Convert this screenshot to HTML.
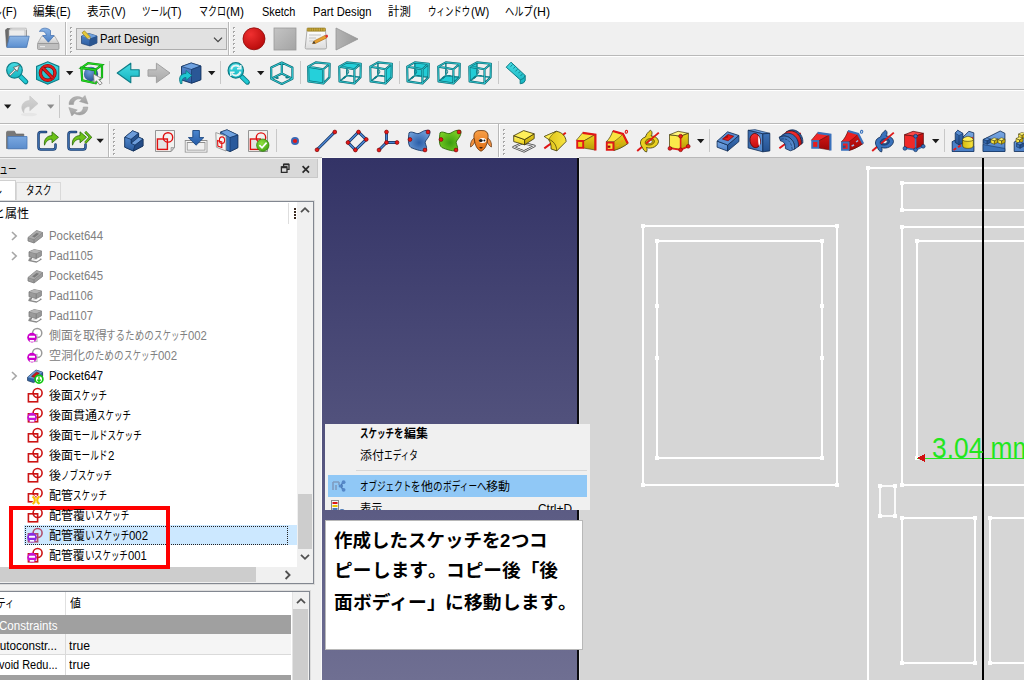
<!DOCTYPE html>
<html lang="ja"><head><meta charset="utf-8"><title>FreeCAD</title>
<style>
html,body{margin:0;padding:0;}
body{width:1024px;height:680px;overflow:hidden;position:relative;background:#f0f0f0;font-family:"Liberation Sans","Noto Sans CJK JP",sans-serif;font-size:12px;}
.a{position:absolute;}
.t{position:absolute;white-space:nowrap;}
.r{display:inline-block;white-space:nowrap;}
.s{display:inline-block;transform-origin:0 50%;white-space:nowrap;}
svg{position:absolute;overflow:visible;}
.hl{position:absolute;left:0;width:1024px;height:1px;}
.vs{position:absolute;width:1px;background:#c5c5c5;}
.hd{position:absolute;width:3px;}

</style></head>
<body>
<!-- menu bar -->
<div class="a" style="left:0;top:0;width:1024px;height:22px;background:#fff"></div>
<!-- toolbar row lines -->
<div class="hl" style="top:55px;background:#b9b9b9"></div><div class="hl" style="top:56px;background:#fff"></div>
<div class="hl" style="top:89px;background:#b9b9b9"></div><div class="hl" style="top:90px;background:#fff"></div>
<div class="hl" style="top:123px;background:#b9b9b9"></div><div class="hl" style="top:124px;background:#fff"></div>
<div class="hl" style="top:157px;background:#b9b9b9"></div><div class="a" style="left:322px;top:157px;width:257px;height:1px;background:#f6f6f4"></div><div class="a" style="left:321px;top:158px;width:1px;height:522px;background:#fafafa"></div>
<!-- 3D view -->
<div class="a" style="left:322px;top:158px;width:255px;height:522px;background:linear-gradient(#333366,#6f6f92)"></div>
<div class="a" style="left:577px;top:158px;width:2px;height:522px;background:#0c0c10"></div>
<div class="a" style="left:579px;top:158px;width:445px;height:522px;background:#d6d6d6"></div><div class="a" style="left:579px;top:158px;width:1px;height:522px;background:#e2e2e2"></div>
<!-- ===== dock: combo view ===== -->
<div class="a" style="left:0;top:159px;width:318px;height:19px;background:#d9d9d9;border-bottom:1px solid #c8c8c8;border-right:1px solid #c8c8c8;box-sizing:border-box"></div>
<!-- float / close buttons -->
<svg style="left:280px;top:163px" width="32" height="12" viewBox="0 0 32 12">
 <path d="M3.6 3.6V1.400h5.400v5h-1.600M1.400 4h5.600v5.400h-5.600z" fill="none" stroke="#2b2b2b" stroke-width="1.300"/><path d="M3.600 1.400h5.400M1.400 4.200h5.600" stroke="#2b2b2b" stroke-width="1.900"/>
 <path d="M22.6 3.2l6.4 6.4M29 3.2l-6.4 6.4" fill="none" stroke="#2b2b2b" stroke-width="1.7"/>
</svg>
<!-- tabs -->
<div class="a" style="left:-2px;top:180px;width:18px;height:22px;background:#fff;border:1px solid #d0d0d0;border-bottom:none;box-sizing:border-box"></div>
<div class="a" style="left:16px;top:182px;width:45px;height:18px;background:#f0f0f0;border:1px solid #d9d9d9;border-bottom:none;box-sizing:border-box"></div>
<!-- tree frame -->
<div class="a" style="left:-2px;top:200px;width:317px;height:385px;border:1px solid #dcdcdc;box-sizing:border-box"></div>
<div class="a" style="left:-2px;top:201px;width:316px;height:383px;border:1px solid #828790;box-sizing:border-box;background:#fff"></div>
<!-- header section -->
<div class="a" style="left:288px;top:203px;width:1px;height:21px;background:#dedede"></div>
<div class="a" style="left:294px;top:208px;width:2px;height:12px;background:repeating-linear-gradient(#3a2a20 0 2px,#fff 2px 3px)"></div>
<!-- vertical scroll bar of tree -->
<div class="a" style="left:297px;top:202px;width:16px;height:365px;background:#f0f0f0"></div>
<div class="a" style="left:298px;top:494px;width:14px;height:55px;background:#cdcdcd"></div>
<svg style="left:300px;top:206px" width="10" height="8" viewBox="0 0 10 8"><path d="M1 6.2l4-4 4 4" fill="none" stroke="#505050" stroke-width="1.8"/></svg>
<svg style="left:300px;top:553px" width="10" height="8" viewBox="0 0 10 8"><path d="M1 1.8l4 4 4-4" fill="none" stroke="#505050" stroke-width="1.8"/></svg>
<!-- horizontal scroll bar of tree -->
<div class="a" style="left:0;top:567px;width:313px;height:16px;background:#f0f0f0"></div>
<div class="a" style="left:0;top:567px;width:256px;height:15px;background:#cdcdcd"></div>
<svg style="left:284px;top:570px" width="8" height="10" viewBox="0 0 8 10"><path d="M1.6 1l4 4-4 4" fill="none" stroke="#505050" stroke-width="1.8"/></svg>
<!-- selected row -->
<div class="a" style="left:24px;top:525px;width:273px;height:19.5px;background:#cce8ff"></div>
<div class="a" style="left:25px;top:525.5px;width:263px;height:19px;border:1px dotted #222;box-sizing:border-box"></div>
<!-- red annotation rectangle -->
<div class="a" style="left:8.5px;top:506.3px;width:161px;height:62.5px;border:4px solid #fe0000;box-sizing:border-box"></div>
<!-- ===== property view ===== -->
<div class="a" style="left:-2px;top:590px;width:313px;height:100px;border:1px solid #dcdcdc;box-sizing:border-box"></div>
<div class="a" style="left:-2px;top:591px;width:312px;height:100px;border:1px solid #828790;box-sizing:border-box;background:#fff"></div>
<div class="a" style="left:0;top:615px;width:291px;height:19px;background:#a0a0a0"></div>
<div class="a" style="left:0;top:634px;width:291px;height:20px;background:#f5f5f5"></div>
<div class="a" style="left:0;top:654px;width:291px;height:1px;background:#dadada"></div>
<div class="a" style="left:0;top:675px;width:291px;height:5px;background:#a0a0a0"></div>
<div class="a" style="left:65px;top:592px;width:1px;height:23px;background:#e0e0e0"></div>
<div class="a" style="left:65px;top:634px;width:1px;height:41px;background:#dadada"></div>
<div class="a" style="left:292px;top:592px;width:1px;height:88px;background:#e4e4e4"></div>
<div class="a" style="left:293px;top:592px;width:16px;height:88px;background:#f0f0f0"></div>
<div class="a" style="left:293px;top:609px;width:15px;height:71px;background:#cdcdcd"></div>
<svg style="left:296px;top:597px" width="10" height="8" viewBox="0 0 10 8"><path d="M1 6.2l4-4 4 4" fill="none" stroke="#505050" stroke-width="1.8"/></svg>

<svg style="left:27px;top:228px" width="16" height="16" viewBox="0 0 16 16"><path d="M1 9.5L9.5 2.5L15.5 4.5L15.5 8.5L7 15L1 13Z" fill="#9c9c9c" stroke="#7c7c7c" stroke-width=".8"/><path d="M1 9.5L7 11.5L15.5 4.5M7 11.5V15" fill="none" stroke="#7c7c7c" stroke-width=".8"/><path d="M5.2 8.6L9.6 5L12 5.8L7.6 9.4Z" fill="#7a7a7a"/><path d="M1 9.5L9.5 2.5L15.5 4.5L7 11.5Z" fill="#b4b4b4" opacity=".6"/><path d="M5.2 8.6L9.6 5L12 5.8L7.6 9.4Z" fill="#7a7a7a"/></svg>
<svg style="left:27px;top:248px" width="16" height="16" viewBox="0 0 16 16"><path d="M2 10.5L5 9.2V11L11 12L14 10.2L14.8 11.5L9.4 14.8L1.2 13Z" fill="#8a8a8a"/><path d="M4.5 11.6L9.6 12.6L12.4 11.2" fill="none" stroke="#fff" stroke-width="1.3"/><path d="M2 3.8L7.2 1.6L14.4 3L14.4 7.8L9.2 10.6L2 8.8Z" fill="#9a9a9a" stroke="#7a7a7a" stroke-width=".8"/><path d="M2 3.8L9.2 5.4L14.4 3M9.2 5.4V10.6" fill="none" stroke="#777" stroke-width=".8"/><path d="M2 3.8L7.2 1.6L14.4 3L9.2 5.4Z" fill="#b6b6b6"/></svg>
<svg style="left:27px;top:268px" width="16" height="16" viewBox="0 0 16 16"><path d="M1 9.5L9.5 2.5L15.5 4.5L15.5 8.5L7 15L1 13Z" fill="#9c9c9c" stroke="#7c7c7c" stroke-width=".8"/><path d="M1 9.5L7 11.5L15.5 4.5M7 11.5V15" fill="none" stroke="#7c7c7c" stroke-width=".8"/><path d="M5.2 8.6L9.6 5L12 5.8L7.6 9.4Z" fill="#7a7a7a"/><path d="M1 9.5L9.5 2.5L15.5 4.5L7 11.5Z" fill="#b4b4b4" opacity=".6"/><path d="M5.2 8.6L9.6 5L12 5.8L7.6 9.4Z" fill="#7a7a7a"/></svg>
<svg style="left:27px;top:288px" width="16" height="16" viewBox="0 0 16 16"><path d="M2 10.5L5 9.2V11L11 12L14 10.2L14.8 11.5L9.4 14.8L1.2 13Z" fill="#8a8a8a"/><path d="M4.5 11.6L9.6 12.6L12.4 11.2" fill="none" stroke="#fff" stroke-width="1.3"/><path d="M2 3.8L7.2 1.6L14.4 3L14.4 7.8L9.2 10.6L2 8.8Z" fill="#9a9a9a" stroke="#7a7a7a" stroke-width=".8"/><path d="M2 3.8L9.2 5.4L14.4 3M9.2 5.4V10.6" fill="none" stroke="#777" stroke-width=".8"/><path d="M2 3.8L7.2 1.6L14.4 3L9.2 5.4Z" fill="#b6b6b6"/></svg>
<svg style="left:27px;top:308px" width="16" height="16" viewBox="0 0 16 16"><path d="M2 10.5L5 9.2V11L11 12L14 10.2L14.8 11.5L9.4 14.8L1.2 13Z" fill="#8a8a8a"/><path d="M4.5 11.6L9.6 12.6L12.4 11.2" fill="none" stroke="#fff" stroke-width="1.3"/><path d="M2 3.8L7.2 1.6L14.4 3L14.4 7.8L9.2 10.6L2 8.8Z" fill="#9a9a9a" stroke="#7a7a7a" stroke-width=".8"/><path d="M2 3.8L9.2 5.4L14.4 3M9.2 5.4V10.6" fill="none" stroke="#777" stroke-width=".8"/><path d="M2 3.8L7.2 1.6L14.4 3L9.2 5.4Z" fill="#b6b6b6"/></svg>
<svg style="left:27px;top:328px" width="16" height="16" viewBox="0 0 16 16"><circle cx="10.2" cy="5" r="4.6" fill="#fff" stroke="#9a9a9a" stroke-width="1.5"/><rect x="3" y="6.5" width="7" height="7" fill="#fff" stroke="#bdbdbd" stroke-width="1.2"/><circle cx="5" cy="9.600" r="4.800" fill="#cc00cc"/><rect x="2" y="7.800" width="6" height="2" rx=".6" fill="#fff"/><rect x="2.800" y="12" width="4.400" height="1.700" fill="#fff"/></svg>
<svg style="left:27px;top:348px" width="16" height="16" viewBox="0 0 16 16"><circle cx="10.2" cy="5" r="4.6" fill="#fff" stroke="#9a9a9a" stroke-width="1.5"/><rect x="3" y="6.5" width="7" height="7" fill="#fff" stroke="#bdbdbd" stroke-width="1.2"/><circle cx="5" cy="9.600" r="4.800" fill="#cc00cc"/><rect x="2" y="7.800" width="6" height="2" rx=".6" fill="#fff"/><rect x="2.800" y="12" width="4.400" height="1.700" fill="#fff"/></svg>
<svg style="left:27px;top:368px" width="16" height="16" viewBox="0 0 16 16"><path d="M0.6 9.2L9 2L15.6 4.2L15.6 8.4L6.6 14.6L0.6 12.6Z" fill="#3465a4" stroke="#16315a" stroke-width=".8"/><path d="M0.6 9.2L9 2L15.6 4.2L6.8 10.8Z" fill="#6f9bd0"/><path d="M4.6 8.4L9.4 4.2L12.4 5.2L7.4 9.4Z" fill="#d01818" stroke="#7a0c0c" stroke-width=".6"/><circle cx="12" cy="11.2" r="3.9" fill="#fff" stroke="#12c812" stroke-width="1.7"/><path d="M12 8.6v4.4M10.2 11.6l1.8 2 1.8-2" fill="none" stroke="#12c812" stroke-width="1.3"/></svg>
<svg style="left:27px;top:388px" width="16" height="16" viewBox="0 0 16 16"><rect x="1.4" y="5.8" width="9.2" height="8" fill="#fff" stroke="#cc1414" stroke-width="1.6"/><circle cx="10.600" cy="5" r="4.500" fill="none" stroke="#cc1414" stroke-width="1.600"/><path d="M5.9 5.8h4.7v4" fill="none" stroke="#cc1414" stroke-width="1.2" opacity=".55"/></svg>
<svg style="left:27px;top:408px" width="16" height="16" viewBox="0 0 16 16"><rect x="1.4" y="5.8" width="9.2" height="8" fill="#fff" stroke="#cc1414" stroke-width="1.6"/><circle cx="10.600" cy="5" r="4.500" fill="none" stroke="#cc1414" stroke-width="1.600"/><path d="M5.9 5.8h4.7v4" fill="none" stroke="#cc1414" stroke-width="1.2" opacity=".55"/><circle cx="5" cy="9.600" r="4.800" fill="#c814d2"/><rect x="2" y="7.800" width="6" height="2" rx=".6" fill="#fff"/><rect x="2.800" y="12" width="4.400" height="1.700" fill="#fff"/></svg>
<svg style="left:27px;top:428px" width="16" height="16" viewBox="0 0 16 16"><rect x="1.4" y="5.8" width="9.2" height="8" fill="#fff" stroke="#cc1414" stroke-width="1.6"/><circle cx="10.600" cy="5" r="4.500" fill="none" stroke="#cc1414" stroke-width="1.600"/><path d="M5.9 5.8h4.7v4" fill="none" stroke="#cc1414" stroke-width="1.2" opacity=".55"/></svg>
<svg style="left:27px;top:448px" width="16" height="16" viewBox="0 0 16 16"><rect x="1.4" y="5.8" width="9.2" height="8" fill="#fff" stroke="#cc1414" stroke-width="1.6"/><circle cx="10.600" cy="5" r="4.500" fill="none" stroke="#cc1414" stroke-width="1.600"/><path d="M5.9 5.8h4.7v4" fill="none" stroke="#cc1414" stroke-width="1.2" opacity=".55"/></svg>
<svg style="left:27px;top:468px" width="16" height="16" viewBox="0 0 16 16"><rect x="1.4" y="5.8" width="9.2" height="8" fill="#fff" stroke="#cc1414" stroke-width="1.6"/><circle cx="10.600" cy="5" r="4.500" fill="none" stroke="#cc1414" stroke-width="1.600"/><path d="M5.9 5.8h4.7v4" fill="none" stroke="#cc1414" stroke-width="1.2" opacity=".55"/></svg>
<svg style="left:27px;top:488px" width="16" height="16" viewBox="0 0 16 16"><rect x="1.4" y="5.8" width="9.2" height="8" fill="#fff" stroke="#cc1414" stroke-width="1.6"/><circle cx="10.600" cy="5" r="4.500" fill="none" stroke="#cc1414" stroke-width="1.600"/><path d="M5.9 5.8h4.7v4" fill="none" stroke="#cc1414" stroke-width="1.2" opacity=".55"/><path d="M5.600 8.400c3 2.200 3 5.400 0 7.600M12.400 8.400c-3 2.200-3 5.400 0 7.600" fill="none" stroke="#fff" stroke-width="3.200"/><path d="M5.600 8.400c3 2.200 3 5.400 0 7.600M12.400 8.400c-3 2.200-3 5.400 0 7.600" fill="none" stroke="#fcc000" stroke-width="2.100"/></svg>
<svg style="left:27px;top:508px" width="16" height="16" viewBox="0 0 16 16"><rect x="1.4" y="5.8" width="9.2" height="8" fill="#fff" stroke="#cc1414" stroke-width="1.6"/><circle cx="10.600" cy="5" r="4.500" fill="none" stroke="#cc1414" stroke-width="1.600"/><path d="M5.9 5.8h4.7v4" fill="none" stroke="#cc1414" stroke-width="1.2" opacity=".55"/></svg>
<svg style="left:27px;top:528px" width="16" height="16" viewBox="0 0 16 16"><rect x="1.4" y="5.8" width="9.2" height="8" fill="#e8e0f0" stroke="#b0506e" stroke-width="1.6"/><circle cx="10.600" cy="5" r="4.500" fill="none" stroke="#b0506e" stroke-width="1.600"/><path d="M5.9 5.8h4.7v4" fill="none" stroke="#b0506e" stroke-width="1.2" opacity=".55"/><circle cx="5" cy="9.600" r="4.800" fill="#8a2be2"/><rect x="2" y="7.800" width="6" height="2" rx=".6" fill="#fff"/><rect x="2.800" y="12" width="4.400" height="1.700" fill="#fff"/></svg>
<svg style="left:27px;top:548px" width="16" height="16" viewBox="0 0 16 16"><rect x="1.4" y="5.8" width="9.2" height="8" fill="#fff" stroke="#cc1414" stroke-width="1.6"/><circle cx="10.600" cy="5" r="4.500" fill="none" stroke="#cc1414" stroke-width="1.600"/><path d="M5.9 5.8h4.7v4" fill="none" stroke="#cc1414" stroke-width="1.2" opacity=".55"/><circle cx="5" cy="9.600" r="4.800" fill="#c814d2"/><rect x="2" y="7.800" width="6" height="2" rx=".6" fill="#fff"/><rect x="2.800" y="12" width="4.400" height="1.700" fill="#fff"/></svg>
<svg style="left:10.5px;top:231px" width="7" height="10" viewBox="0 0 7 10"><path d="M1 1l4.2 4-4.2 4" fill="none" stroke="#a6a6a6" stroke-width="1.6"/></svg>
<svg style="left:10.5px;top:251px" width="7" height="10" viewBox="0 0 7 10"><path d="M1 1l4.2 4-4.2 4" fill="none" stroke="#a6a6a6" stroke-width="1.6"/></svg>
<svg style="left:10.5px;top:371px" width="7" height="10" viewBox="0 0 7 10"><path d="M1 1l4.2 4-4.2 4" fill="none" stroke="#a6a6a6" stroke-width="1.6"/></svg>
<svg style="left:0;top:0" width="1024" height="158" viewBox="0 0 1024 158"><defs><linearGradient id="gFold" x1="0" y1="0" x2="0" y2="1"><stop offset="0" stop-color="#8db5e4"/><stop offset="1" stop-color="#5b8fd0"/></linearGradient><linearGradient id="gDrv" x1="0" y1="0" x2="0" y2="1"><stop offset="0" stop-color="#f0f0f0"/><stop offset="1" stop-color="#c8c8c8"/></linearGradient><linearGradient id="gArr" x1="0" y1="0" x2="0" y2="1"><stop offset="0" stop-color="#8ab4e6"/><stop offset="1" stop-color="#4a7fc4"/></linearGradient><linearGradient id="gCubF" x1="0" y1="0" x2="0" y2="1"><stop offset="0" stop-color="#4f86cc"/><stop offset="1" stop-color="#2f5ea0"/></linearGradient><radialGradient id="gRec" cx="0.35" cy="0.3" r="0.8"><stop offset="0" stop-color="#f03030"/><stop offset="1" stop-color="#b40808"/></radialGradient><linearGradient id="gStop" x1="0" y1="0" x2="1" y2="1"><stop offset="0" stop-color="#c4c4c4"/><stop offset="1" stop-color="#a4a4a4"/></linearGradient><linearGradient id="gPad" x1="0" y1="0" x2="0" y2="1"><stop offset="0" stop-color="#ffffff"/><stop offset="1" stop-color="#dcdcdc"/></linearGradient><linearGradient id="gPlay" x1="0" y1="0" x2="1" y2="0"><stop offset="0" stop-color="#b4b4b4"/><stop offset="1" stop-color="#9a9a9a"/></linearGradient><linearGradient id="gCy" x1="0" y1="0" x2="0" y2="1"><stop offset="0" stop-color="#48dce4"/><stop offset="1" stop-color="#14b4c0"/></linearGradient><radialGradient id="gSph" cx="0.4" cy="0.35" r="0.7"><stop offset="0" stop-color="#6f9fdc"/><stop offset="1" stop-color="#244e8c"/></radialGradient><linearGradient id="gGr" x1="0" y1="0" x2="0" y2="1"><stop offset="0" stop-color="#c8c8c8"/><stop offset="1" stop-color="#a8a8a8"/></linearGradient><linearGradient id="gB1" x1="0" y1="0" x2="0" y2="1"><stop offset="0" stop-color="#5b8fd4"/><stop offset="1" stop-color="#2c5ea4"/></linearGradient><linearGradient id="gRedo" x1="0" y1="0" x2="0" y2="1"><stop offset="0" stop-color="#d4d4d4"/><stop offset="1" stop-color="#c0c0c0"/></linearGradient><linearGradient id="gRef" x1="0" y1="0" x2="0" y2="1"><stop offset="0" stop-color="#b8b8b8"/><stop offset="1" stop-color="#9c9c9c"/></linearGradient><linearGradient id="gFold2" x1="0" y1="0" x2="0" y2="1"><stop offset="0" stop-color="#7aa8e0"/><stop offset="1" stop-color="#5a8ccc"/></linearGradient><linearGradient id="gBodyF" x1="0" y1="0" x2="0" y2="1"><stop offset="0" stop-color="#4f86cc"/><stop offset="1" stop-color="#2a5a9c"/></linearGradient><linearGradient id="gDn" x1="0" y1="0" x2="0" y2="1"><stop offset="0" stop-color="#4a86d0"/><stop offset="1" stop-color="#245aa4"/></linearGradient><radialGradient id="gChk" cx="0.4" cy="0.35" r="0.75"><stop offset="0" stop-color="#8ee040"/><stop offset="1" stop-color="#3c9c10"/></radialGradient><radialGradient id="gSB" cx="0.5" cy="0.6" r="0.7"><stop offset="0" stop-color="#2c5ea8"/><stop offset="1" stop-color="#78a8e0"/></radialGradient><radialGradient id="gSG" cx="0.5" cy="0.6" r="0.7"><stop offset="0" stop-color="#3c9c10"/><stop offset="1" stop-color="#84d828"/></radialGradient><linearGradient id="gShp" x1="0" y1="0" x2="0" y2="1"><stop offset="0" stop-color="#f8a048"/><stop offset="1" stop-color="#e06c10"/></linearGradient><linearGradient id="gY1" x1="0" y1="0" x2="0" y2="1"><stop offset="0" stop-color="#fff26a"/><stop offset="1" stop-color="#e8cc14"/></linearGradient><linearGradient id="gY2" x1="0" y1="0" x2="0" y2="1"><stop offset="0" stop-color="#ecd21c"/><stop offset="1" stop-color="#b89c08"/></linearGradient><linearGradient id="gY3" x1="0" y1="0" x2="1" y2="0"><stop offset="0" stop-color="#d8bc10"/><stop offset="1" stop-color="#f8e440"/></linearGradient><linearGradient id="gBl1" x1="0" y1="0" x2="0" y2="1"><stop offset="0" stop-color="#7aa8e2"/><stop offset="1" stop-color="#4a7ec6"/></linearGradient><linearGradient id="gBl2" x1="0" y1="0" x2="0" y2="1"><stop offset="0" stop-color="#3c72b8"/><stop offset="1" stop-color="#24508e"/></linearGradient><linearGradient id="gBl3" x1="0" y1="0" x2="1" y2="0"><stop offset="0" stop-color="#3468ac"/><stop offset="1" stop-color="#5a8ed0"/></linearGradient><linearGradient id="gR1" x1="0" y1="0" x2="0" y2="1"><stop offset="0" stop-color="#f43030"/><stop offset="1" stop-color="#c40c0c"/></linearGradient><linearGradient id="gR2" x1="0" y1="0" x2="0" y2="1"><stop offset="0" stop-color="#d41414"/><stop offset="1" stop-color="#9c0808"/></linearGradient></defs><rect x="65" y="22" width="1" height="33" fill="#b9b9b9"/><rect x="66" y="22" width="1" height="33" fill="#fff"/><rect x="70" y="27" width="2" height="2" fill="#a6a6a6"/><rect x="71" y="28" width="1" height="1" fill="#fff"/><rect x="70" y="31" width="2" height="2" fill="#a6a6a6"/><rect x="71" y="32" width="1" height="1" fill="#fff"/><rect x="70" y="35" width="2" height="2" fill="#a6a6a6"/><rect x="71" y="36" width="1" height="1" fill="#fff"/><rect x="70" y="39" width="2" height="2" fill="#a6a6a6"/><rect x="71" y="40" width="1" height="1" fill="#fff"/><rect x="70" y="43" width="2" height="2" fill="#a6a6a6"/><rect x="71" y="44" width="1" height="1" fill="#fff"/><rect x="70" y="47" width="2" height="2" fill="#a6a6a6"/><rect x="71" y="48" width="1" height="1" fill="#fff"/><rect x="70" y="51" width="2" height="2" fill="#a6a6a6"/><rect x="71" y="52" width="1" height="1" fill="#fff"/><rect x="228" y="22" width="1" height="33" fill="#b9b9b9"/><rect x="229" y="22" width="1" height="33" fill="#fff"/><rect x="233" y="27" width="2" height="2" fill="#a6a6a6"/><rect x="234" y="28" width="1" height="1" fill="#fff"/><rect x="233" y="31" width="2" height="2" fill="#a6a6a6"/><rect x="234" y="32" width="1" height="1" fill="#fff"/><rect x="233" y="35" width="2" height="2" fill="#a6a6a6"/><rect x="234" y="36" width="1" height="1" fill="#fff"/><rect x="233" y="39" width="2" height="2" fill="#a6a6a6"/><rect x="234" y="40" width="1" height="1" fill="#fff"/><rect x="233" y="43" width="2" height="2" fill="#a6a6a6"/><rect x="234" y="44" width="1" height="1" fill="#fff"/><rect x="233" y="47" width="2" height="2" fill="#a6a6a6"/><rect x="234" y="48" width="1" height="1" fill="#fff"/><rect x="233" y="51" width="2" height="2" fill="#a6a6a6"/><rect x="234" y="52" width="1" height="1" fill="#fff"/><rect x="109" y="61" width="1" height="23" fill="#c8c8c8"/><rect x="220" y="61" width="1" height="23" fill="#c8c8c8"/><rect x="300" y="61" width="1" height="23" fill="#c8c8c8"/><rect x="399" y="61" width="1" height="23" fill="#c8c8c8"/><rect x="498" y="61" width="1" height="23" fill="#c8c8c8"/><rect x="59" y="95" width="1" height="23" fill="#c8c8c8"/><rect x="108" y="124" width="1" height="33" fill="#b9b9b9"/><rect x="109" y="124" width="1" height="33" fill="#fff"/><rect x="113" y="129" width="2" height="2" fill="#a6a6a6"/><rect x="114" y="130" width="1" height="1" fill="#fff"/><rect x="113" y="133" width="2" height="2" fill="#a6a6a6"/><rect x="114" y="134" width="1" height="1" fill="#fff"/><rect x="113" y="137" width="2" height="2" fill="#a6a6a6"/><rect x="114" y="138" width="1" height="1" fill="#fff"/><rect x="113" y="141" width="2" height="2" fill="#a6a6a6"/><rect x="114" y="142" width="1" height="1" fill="#fff"/><rect x="113" y="145" width="2" height="2" fill="#a6a6a6"/><rect x="114" y="146" width="1" height="1" fill="#fff"/><rect x="113" y="149" width="2" height="2" fill="#a6a6a6"/><rect x="114" y="150" width="1" height="1" fill="#fff"/><rect x="113" y="153" width="2" height="2" fill="#a6a6a6"/><rect x="114" y="154" width="1" height="1" fill="#fff"/><rect x="276" y="129" width="1" height="23" fill="#c8c8c8"/><rect x="498" y="124" width="1" height="33" fill="#b9b9b9"/><rect x="499" y="124" width="1" height="33" fill="#fff"/><rect x="503" y="129" width="2" height="2" fill="#a6a6a6"/><rect x="504" y="130" width="1" height="1" fill="#fff"/><rect x="503" y="133" width="2" height="2" fill="#a6a6a6"/><rect x="504" y="134" width="1" height="1" fill="#fff"/><rect x="503" y="137" width="2" height="2" fill="#a6a6a6"/><rect x="504" y="138" width="1" height="1" fill="#fff"/><rect x="503" y="141" width="2" height="2" fill="#a6a6a6"/><rect x="504" y="142" width="1" height="1" fill="#fff"/><rect x="503" y="145" width="2" height="2" fill="#a6a6a6"/><rect x="504" y="146" width="1" height="1" fill="#fff"/><rect x="503" y="149" width="2" height="2" fill="#a6a6a6"/><rect x="504" y="150" width="1" height="1" fill="#fff"/><rect x="503" y="153" width="2" height="2" fill="#a6a6a6"/><rect x="504" y="154" width="1" height="1" fill="#fff"/><rect x="709" y="129" width="1" height="23" fill="#c8c8c8"/><rect x="944" y="129" width="1" height="23" fill="#c8c8c8"/><path d="M66 71h7.4l-3.7 4.2z" fill="#1a1a1a"/><path d="M208 71h7.4l-3.7 4.2z" fill="#1a1a1a"/><path d="M257 71h7.4l-3.7 4.2z" fill="#1a1a1a"/><path d="M4 104.5h7.4l-3.7 4.2z" fill="#1a1a1a"/><path d="M47 104.5h7.4l-3.7 4.2z" fill="#8c8c8c"/><path d="M96.5 138.8h7.4l-3.7 4.2z" fill="#1a1a1a"/><path d="M697 139h7.4l-3.7 4.2z" fill="#1a1a1a"/><path d="M932 139h7.4l-3.7 4.2z" fill="#1a1a1a"/><path d="M5.5 30L7 28.5H12L13.2 30.2H26.5V46.5H6.5Z" fill="#6b6b6b" stroke="#555" stroke-width=".6"/><path d="M10 28.2H26.2V40H10Z" fill="#f6f6f6" stroke="#a8a8a8" stroke-width=".7"/><path d="M9 29.8H25V40H9Z" fill="#ececec" stroke="#a8a8a8" stroke-width=".6"/><path d="M9.6 36.2H29.2L26.6 47.4H6.8Z" fill="url(#gFold)" stroke="#4876b4" stroke-width=".8"/><path d="M41.5 36.5H55L59 43.5H37.5Z" fill="url(#gDrv)" stroke="#9a9a9a" stroke-width=".7"/><rect x="37.5" y="43.5" width="21.5" height="6" rx="1" fill="#bfbfbf" stroke="#8c8c8c" stroke-width=".7"/><rect x="40" y="46" width="5" height="1.2" fill="#e8e8e8"/><path d="M39.5 31.5C41 27.5 47 27 50.5 30.5V35.5H54.2L48.4 42.2L42.6 35.5H46.2C46.2 32.5 43.5 30.5 39.5 31.5Z" fill="url(#gArr)" stroke="#3c6cae" stroke-width=".7"/><rect x="76.5" y="28.5" width="150" height="21" fill="#e1e1e1" stroke="#adadad" stroke-width="1"/><path d="M214 37.6l4 4 4-4" fill="none" stroke="#444" stroke-width="1.3"/><path d="M81.5 36L89 33.5L97 36V43L90 46L81.5 43.5Z" fill="url(#gCubF)" stroke="#1c3e70" stroke-width=".7"/><path d="M81.5 36L90 38.5L97 36L89 33.5Z" fill="#6fa0dc"/><path d="M90 38.5V46" stroke="#1c3e70" stroke-width=".7"/><path d="M90 38.5L97 36V43L90 46Z" fill="#2a558f"/><path d="M82 32.8L84.4 30.8L90.4 37L89.6 39.2L87.4 38.8Z" fill="#e6c93c" stroke="#8a7410" stroke-width=".6"/><path d="M87.4 38.8L89.6 39.2L90.4 37Z" fill="#f4f4f4" stroke="#777" stroke-width=".4"/><circle cx="254" cy="38.8" r="11" fill="url(#gRec)" stroke="#8e0a0a" stroke-width=".8"/><rect x="274" y="28" width="22" height="22" fill="url(#gStop)" stroke="#9a9a9a" stroke-width=".8"/><path d="M307 30.5H325.5L326.6 47.5Q326.6 49 325 49H306.5Q305 49 305.2 47.5Z" fill="url(#gPad)" stroke="#9c9c9c" stroke-width=".8"/><rect x="307" y="28" width="18.5" height="3.2" rx=".8" fill="#c8a83c" stroke="#8c7420" stroke-width=".6"/><path d="M309 28v3M311.3 28v3M313.6 28v3M315.9 28v3M318.200 28v3M320.5 28v3M322.800 28v3" stroke="#8c7420" stroke-width=".6"/><path d="M309 35h12M309 38h7M309 41h5" stroke="#c4c4c4" stroke-width="1"/><path d="M312.500 43.6L314 41L325 35.4L326.600 38L315.500 43.4Z" fill="#e8a030" stroke="#a66a10" stroke-width=".6"/><path d="M325 35.4L327 34.400Q328.300 35 328 36.800L326.600 38Z" fill="#e03030"/><path d="M312.500 43.6L314 41L315.500 43.4Z" fill="#3a3a3a"/><path d="M336 28L358 39L336 50Z" fill="url(#gPlay)" stroke="#949494" stroke-width=".8"/><path d="M20.5 76.500L25.800 81.800" stroke="#0c7c86" stroke-width="5" stroke-linecap="round"/><path d="M20.5 76.500L25.600 81.600" stroke="#1fc8d2" stroke-width="3.2" stroke-linecap="round"/><circle cx="14.5" cy="70.300" r="7.800" fill="url(#gCy)" stroke="#0c7c86" stroke-width="1.2"/><path d="M9.5 75.300L15.300 69.500L13.300 67.500L19.500 65.300L17.300 71.500L15.300 69.500" fill="#f0f0f0" stroke="#5a5a5a" stroke-width=".8" stroke-linejoin="round"/><path d="M9.200 74.600L14.800 69L16 70.200L10.400 75.800Z" fill="#f0f0f0" stroke="#5a5a5a" stroke-width=".7"/><path d="M47.700 61.800L58.800 66.400V79.400L47.700 84.200L36.600 79.400V66.400Z" fill="url(#gCy)" stroke="#0c7c86" stroke-width="1.1"/><circle cx="47.700" cy="73" r="7.300" fill="none" stroke="#7a0c0c" stroke-width="3.400"/><circle cx="47.700" cy="73" r="7.300" fill="none" stroke="#e01c1c" stroke-width="2.200"/><path d="M42.600 67.800L52.800 78.200" stroke="#7a0c0c" stroke-width="3.400"/><path d="M42.600 67.800L52.800 78.200" stroke="#e01c1c" stroke-width="2.200"/><circle cx="91" cy="74" r="7.200" fill="url(#gSph)"/><path d="M81.400 67.800L88.200 63.200L102 65L95.300 69.800Z" fill="none" stroke="#0c8c0c" stroke-width="2.200"/><path d="M81.400 67.800L88.200 63.200L102 65L95.300 69.800Z" fill="none" stroke="#22d822" stroke-width="1.200"/><path d="M81.400 67.800L95.300 69.800V83.200L82.200 80.400Z" fill="none" stroke="#0c8c0c" stroke-width="2.200"/><path d="M81.400 67.800L95.300 69.800V83.200L82.200 80.400Z" fill="none" stroke="#22d822" stroke-width="1.200"/><path d="M102 65V77.200L95.300 83.200" fill="none" stroke="#0c8c0c" stroke-width="2.200"/><path d="M102 65V77.200L95.300 83.200" fill="none" stroke="#22d822" stroke-width="1.200"/><path d="M93.500 74L94.200 83L96.500 80.800L99.800 85L102.200 83.300L98.800 79.500L101.800 78.500Z" fill="#f4f4f4" stroke="#777" stroke-width=".8"/><path d="M117.200 73L130.800 63.200V69.800H139.200V76.200H130.800V82.800Z" fill="url(#gCy)" stroke="#0c7c86" stroke-width="1.100" stroke-linejoin="round"/><path d="M170 73L156.400 63.200V69.800H148V76.200H156.400V82.800Z" fill="url(#gGr)" stroke="#a0a0a0" stroke-width="1" stroke-linejoin="round"/><path d="M181.500 66.500L191.200 63L200.800 66V79.800L191.500 83.200L181.500 80Z" fill="url(#gB1)" stroke="#12305c" stroke-width=".9"/><path d="M181.500 66.500L191.200 63L200.800 66L191.500 69.500Z" fill="#6fa2e0" stroke="#12305c" stroke-width=".6"/><path d="M191.500 69.500V83.200L200.800 79.800V66Z" fill="#2a5796" stroke="#12305c" stroke-width=".6"/><path d="M180.500 83.600C178 77 181 73.500 186 73.500V70.500L191.800 75.500L186 80.500V77.500C183 77.500 181.500 79.500 182 83.500Z" fill="#1fc8d2" stroke="#0c7c86" stroke-width=".9" stroke-linejoin="round"/><path d="M241.800 76.800L247.400 82.200" stroke="#0c7c86" stroke-width="5" stroke-linecap="round"/><path d="M241.800 76.800L247.200 82" stroke="#1fc8d2" stroke-width="3.200" stroke-linecap="round"/><circle cx="235.800" cy="70.400" r="7.700" fill="url(#gCy)" stroke="#0c7c86" stroke-width="1.200"/><path d="M231.200 69.500A4.800 4.800 0 0 1 239.800 67.500M240.400 71.500A4.800 4.800 0 0 1 231.800 73.500" fill="none" stroke="#e8f4f4" stroke-width="1.900"/><path d="M240.800 65V68.800H237M230.800 76V72.200H234.600" fill="none" stroke="#e8f4f4" stroke-width="1.500"/><path d="M281.8 62.600L292.40000000000003 67.600V78.800L281.8 84L271.20000000000005 78.800V67.600ZM281.8 62.600V73.400M271.20000000000005 78.800L281.8 73.400L292.40000000000003 78.800" fill="none" stroke="#0a6a74" stroke-width="2.200" stroke-linejoin="round"/><path d="M281.8 62.600L292.40000000000003 67.600V78.800L281.8 84L271.20000000000005 78.800V67.600ZM281.8 62.600V73.400M271.20000000000005 78.800L281.8 73.400L292.40000000000003 78.800" fill="none" stroke="#38d4dc" stroke-width=".9" stroke-linejoin="round"/><ellipse cx="277.1" cy="78" rx="1.800" ry="1" fill="#0c7c86"/><ellipse cx="287.1" cy="77.600" rx="1.800" ry="1" fill="#0c7c86"/><path d="M308.1 66.6L323.3 69.2L323.3 83.5L308.4 81.4Z" fill="#25d0da"/><path d="M308.1 66.6L315.7 62.4L329.7 63.8L323.3 69.2ZM308.1 66.6L308.4 81.4L323.3 83.5L323.3 69.2M323.3 83.5L329.4 77.2L329.7 63.8" fill="none" stroke="#0a6a74" stroke-width="2.100" stroke-linejoin="round"/><path d="M308.1 66.6L315.7 62.4L329.7 63.8L323.3 69.2ZM308.1 66.6L308.4 81.4L323.3 83.5L323.3 69.2M323.3 83.5L329.4 77.2L329.7 63.8" fill="none" stroke="#38d4dc" stroke-width=".8" stroke-linejoin="round"/><path d="M346.8 62.4L346.8 75.6M339.5 81.4L346.8 75.6L360.5 77.2" fill="none" stroke="#0a6a74" stroke-width="1.500"/><path d="M346.8 62.4L346.8 75.6M339.5 81.4L346.8 75.6L360.5 77.2" fill="none" stroke="#38d4dc" stroke-width=".5"/><path d="M339.2 66.6L346.8 62.4L360.8 63.8L354.4 69.2Z" fill="#25d0da"/><path d="M339.2 66.6L346.8 62.4L360.8 63.8L354.4 69.2ZM339.2 66.6L339.5 81.4L354.4 83.5L354.4 69.2M354.4 83.5L360.5 77.2L360.8 63.8" fill="none" stroke="#0a6a74" stroke-width="2.100" stroke-linejoin="round"/><path d="M339.2 66.6L346.8 62.4L360.8 63.8L354.4 69.2ZM339.2 66.6L339.5 81.4L354.4 83.5L354.4 69.2M354.4 83.5L360.5 77.2L360.8 63.8" fill="none" stroke="#38d4dc" stroke-width=".8" stroke-linejoin="round"/><ellipse cx="344.40000000000003" cy="77.4" rx="1.800" ry=".9" fill="#0c7c86" transform="rotate(-32 344.40000000000003 77.4)"/><ellipse cx="350.40000000000003" cy="75.6" rx="1.500" ry=".7" fill="#0c7c86"/><ellipse cx="347.6" cy="71.8" rx="1.100" ry="1.900" fill="none" stroke="#0c7c86" stroke-width=".9"/><path d="M377.9 62.4L377.9 75.6M370.6 81.4L377.9 75.6L391.6 77.2" fill="none" stroke="#0a6a74" stroke-width="1.500"/><path d="M377.9 62.4L377.9 75.6M370.6 81.4L377.9 75.6L391.6 77.2" fill="none" stroke="#38d4dc" stroke-width=".5"/><path d="M385.5 69.2L391.9 63.8L391.6 77.2L385.5 83.5Z" fill="#25d0da"/><path d="M370.3 66.6L377.9 62.4L391.9 63.8L385.5 69.2ZM370.3 66.6L370.6 81.4L385.5 83.5L385.5 69.2M385.5 83.5L391.6 77.2L391.9 63.8" fill="none" stroke="#0a6a74" stroke-width="2.100" stroke-linejoin="round"/><path d="M370.3 66.6L377.9 62.4L391.9 63.8L385.5 69.2ZM370.3 66.6L370.6 81.4L385.5 83.5L385.5 69.2M385.5 83.5L391.6 77.2L391.9 63.8" fill="none" stroke="#38d4dc" stroke-width=".8" stroke-linejoin="round"/><ellipse cx="375.5" cy="77.4" rx="1.800" ry=".9" fill="#0c7c86" transform="rotate(-32 375.5 77.4)"/><ellipse cx="381.5" cy="75.6" rx="1.500" ry=".7" fill="#0c7c86"/><ellipse cx="378.7" cy="71.8" rx="1.100" ry="1.900" fill="none" stroke="#0c7c86" stroke-width=".9"/><path d="M414.8 62.4L428.8 63.8L428.5 77.2L414.8 75.6Z" fill="#22ccd6"/><path d="M414.8 62.4L414.8 75.6M407.5 81.4L414.8 75.6L428.5 77.2" fill="none" stroke="#0a6a74" stroke-width="1.500"/><path d="M414.8 62.4L414.8 75.6M407.5 81.4L414.8 75.6L428.5 77.2" fill="none" stroke="#38d4dc" stroke-width=".5"/><path d="M407.2 66.6L414.8 62.4L428.8 63.8L422.4 69.2ZM407.2 66.6L407.5 81.4L422.4 83.5L422.4 69.2M422.4 83.5L428.5 77.2L428.8 63.8" fill="none" stroke="#0a6a74" stroke-width="2.100" stroke-linejoin="round"/><path d="M407.2 66.6L414.8 62.4L428.8 63.8L422.4 69.2ZM407.2 66.6L407.5 81.4L422.4 83.5L422.4 69.2M422.4 83.5L428.5 77.2L428.8 63.8" fill="none" stroke="#38d4dc" stroke-width=".8" stroke-linejoin="round"/><ellipse cx="412.40000000000003" cy="77.4" rx="1.800" ry=".9" fill="#0c7c86" transform="rotate(-32 412.40000000000003 77.4)"/><ellipse cx="418.40000000000003" cy="75.6" rx="1.500" ry=".7" fill="#0c7c86"/><ellipse cx="415.6" cy="71.8" rx="1.100" ry="1.900" fill="none" stroke="#0c7c86" stroke-width=".9"/><path d="M438.5 81.4L445.8 75.6L459.5 77.2L453.4 83.5Z" fill="#22ccd6"/><path d="M445.8 62.4L445.8 75.6M438.5 81.4L445.8 75.6L459.5 77.2" fill="none" stroke="#0a6a74" stroke-width="1.500"/><path d="M445.8 62.4L445.8 75.6M438.5 81.4L445.8 75.6L459.5 77.2" fill="none" stroke="#38d4dc" stroke-width=".5"/><path d="M438.2 66.6L445.8 62.4L459.8 63.8L453.4 69.2ZM438.2 66.6L438.5 81.4L453.4 83.5L453.4 69.2M453.4 83.5L459.5 77.2L459.8 63.8" fill="none" stroke="#0a6a74" stroke-width="2.100" stroke-linejoin="round"/><path d="M438.2 66.6L445.8 62.4L459.8 63.8L453.4 69.2ZM438.2 66.6L438.5 81.4L453.4 83.5L453.4 69.2M453.4 83.5L459.5 77.2L459.8 63.8" fill="none" stroke="#38d4dc" stroke-width=".8" stroke-linejoin="round"/><ellipse cx="443.40000000000003" cy="77.4" rx="1.800" ry=".9" fill="#0c7c86" transform="rotate(-32 443.40000000000003 77.4)"/><ellipse cx="449.40000000000003" cy="75.6" rx="1.500" ry=".7" fill="#0c7c86"/><ellipse cx="446.6" cy="71.8" rx="1.100" ry="1.900" fill="none" stroke="#0c7c86" stroke-width=".9"/><path d="M469.3 66.6L476.9 62.4L476.9 75.6L469.6 81.4Z" fill="#22ccd6"/><path d="M476.9 62.4L476.9 75.6M469.6 81.4L476.9 75.6L490.6 77.2" fill="none" stroke="#0a6a74" stroke-width="1.500"/><path d="M476.9 62.4L476.9 75.6M469.6 81.4L476.9 75.6L490.6 77.2" fill="none" stroke="#38d4dc" stroke-width=".5"/><path d="M469.3 66.6L476.9 62.4L490.9 63.8L484.5 69.2ZM469.3 66.6L469.6 81.4L484.5 83.5L484.5 69.2M484.5 83.5L490.6 77.2L490.9 63.8" fill="none" stroke="#0a6a74" stroke-width="2.100" stroke-linejoin="round"/><path d="M469.3 66.6L476.9 62.4L490.9 63.8L484.5 69.2ZM469.3 66.6L469.6 81.4L484.5 83.5L484.5 69.2M484.5 83.5L490.6 77.2L490.9 63.8" fill="none" stroke="#38d4dc" stroke-width=".8" stroke-linejoin="round"/><ellipse cx="474.5" cy="77.4" rx="1.800" ry=".9" fill="#0c7c86" transform="rotate(-32 474.5 77.4)"/><ellipse cx="480.5" cy="75.6" rx="1.500" ry=".7" fill="#0c7c86"/><ellipse cx="477.7" cy="71.8" rx="1.100" ry="1.900" fill="none" stroke="#0c7c86" stroke-width=".9"/><path d="M506.200 67.200L511 62.200L525.200 75.500V80.500Q524.500 83.500 520.200 83.800V79.800Z" fill="url(#gCy)" stroke="#0c7c86" stroke-width="1" stroke-linejoin="round"/><path d="M520.200 79.800Q524 79.500 525.200 75.500" fill="none" stroke="#0c7c86" stroke-width=".9"/><path d="M512.500 64.500l-2 2.200M515 66.800l-1.500 1.700M517.500 69.200l-2 2.200M520 71.500l-1.500 1.700M522.500 73.800l-2 2.200" stroke="#0c7c86" stroke-width=".9"/><ellipse cx="29" cy="114.500" rx="8" ry="1.800" fill="#e6e6e6"/><path d="M29.800 96L38 103.600L29.800 110.800V106.600C26 106.200 23.500 108.500 23.800 112.800C20 108 21.500 101 29.800 100.400Z" fill="url(#gRedo)" stroke="#c4c4c4" stroke-width=".6" stroke-linejoin="round"/><path d="M69 104.500C69 98 76 94.500 82.500 98L85 95.500L88 104L79.500 101.500L82 99.500C78 97.500 73.500 100 73.500 104.500Z" fill="url(#gRef)" stroke="#9a9a9a" stroke-width=".5" stroke-linejoin="round"/><path d="M87.800 107C87.800 113.500 80.800 117 74.300 113.500L71.800 116L68.800 107.500L77.300 110L74.800 112C78.800 114 83.300 111.500 83.300 107Z" fill="url(#gRef)" stroke="#9a9a9a" stroke-width=".5" stroke-linejoin="round"/><path d="M6.500 132.500Q6.500 131.200 7.800 131.200H14.500L15.800 134H23.800V148.500H6.500Z" fill="#787878" stroke="#5c5c5c" stroke-width=".6"/><path d="M7.800 136.500H27V148.800H7.800Z" fill="url(#gFold2)" stroke="#4a78b8" stroke-width=".8"/><path d="M46.1 132H41.0Q38.5 132 38.5 134.500V147Q38.5 149.600 41.0 149.600H53.0Q55.5 149.600 55.5 147V144.500" fill="none" stroke="#16386a" stroke-width="2.500" stroke-linecap="round"/><path d="M46.1 132H41.0Q38.5 132 38.5 134.500V147Q38.5 149.600 41.0 149.600H53.0Q55.5 149.600 55.5 147V144.500" fill="none" stroke="#3a6cac" stroke-width="1.200" stroke-linecap="round"/><path d="M44.5 145.200C43.5 139 47.5 135.600 52.0 135.600V131.800L58.5 137.300L52.0 142.800V139.200C48.5 139.200 46.0 141 44.5 145.200Z" fill="#6cc218" stroke="#2a6a08" stroke-width=".8" stroke-linejoin="round"/><path d="M76.1 132H71.0Q68.5 132 68.5 134.500V147Q68.5 149.600 71.0 149.600H83.0Q85.5 149.600 85.5 147V144.500" fill="none" stroke="#16386a" stroke-width="2.500" stroke-linecap="round"/><path d="M76.1 132H71.0Q68.5 132 68.5 134.500V147Q68.5 149.600 71.0 149.600H83.0Q85.5 149.600 85.5 147V144.500" fill="none" stroke="#3a6cac" stroke-width="1.200" stroke-linecap="round"/><path d="M72.5 145.200C71.5 139 75.5 135.600 80.0 135.600V131.800L86.5 137.300L80.0 142.800V139.200C76.5 139.200 74.0 141 72.5 145.200Z" fill="#6cc218" stroke="#2a6a08" stroke-width=".8" stroke-linejoin="round"/><path d="M85.200 131.800L90.400 137.200L85.200 142.800" fill="none" stroke="#2a6a08" stroke-width="2.600"/><path d="M85.200 131.800L90.400 137.200L85.200 142.800" fill="none" stroke="#6cc218" stroke-width="1.400"/><path d="M124.800 137.200L132.600 130.800L138.600 133.200V137.200L143 139V146L133.400 151L124.800 147.200Z" fill="#2f62a6" stroke="#0e2a52" stroke-width=".9" stroke-linejoin="round"/><path d="M124.800 137.200L132.600 130.800L138.600 133.200L131 139.400Z" fill="#6c9cda" stroke="#0e2a52" stroke-width=".5"/><path d="M131 139.400V143.400L138.600 137.200V133.200Z" fill="#27528e" stroke="#0e2a52" stroke-width=".5"/><path d="M131 143.400L138.600 137.200L143 139L135 145.200Z" fill="#6c9cda" stroke="#0e2a52" stroke-width=".5"/><path d="M124.800 137.200L131 139.400V143.400L135 145.200L133.400 151L124.800 147.200Z" fill="url(#gBodyF)" stroke="#0e2a52" stroke-width=".5"/><path d="M135 145.200L143 139V146L133.400 151Z" fill="#244c86" stroke="#0e2a52" stroke-width=".5"/><path d="M155.5 130.5H174.5V147.5L171 151.5H155.5Z" fill="#f2f2f0" stroke="#8a8a8a" stroke-width=".9"/><path d="M174.5 147.5H171V151.5Z" fill="#c8c8c8" stroke="#8a8a8a" stroke-width=".6"/><rect x="157.4" y="139" width="10" height="10.400" fill="#e4e4e4" stroke="#e01010" stroke-width="1.400"/><circle cx="168" cy="137.4" r="4.700" fill="none" stroke="#e01010" stroke-width="1.400"/><path d="M186.200 141.500H206V151.200H186.200Z" fill="none" stroke="#8e8e8e" stroke-width="2.800"/><path d="M186.200 141.500H206V151.200H186.200Z" fill="none" stroke="#f6f6f6" stroke-width="1.200"/><path d="M192.800 130.500H199.400V137.600H203.800L196.100 145.200L188.400 137.600H192.800Z" fill="url(#gDn)" stroke="#1a4680" stroke-width=".9" stroke-linejoin="round"/><path d="M220.600 132L227 129.800L237.800 135V147.800L230 151.600L220.600 148Z" fill="#3a72b8" stroke="#0e2a52" stroke-width=".8" stroke-linejoin="round"/><path d="M220.600 132L227 129.800L237.800 135L230 137.600Z" fill="#6fa2e0" stroke="#0e2a52" stroke-width=".5"/><path d="M230 137.600V151.600L237.800 147.800V135Z" fill="#2a5a9c" stroke="#0e2a52" stroke-width=".5"/><path d="M215.800 132.600L226 136V151L216.400 147.200Z" fill="#f4f4f2" stroke="#8a8a8a" stroke-width=".8"/><path d="M217.600 140.600L221.800 141.800V147.400L217.800 146Z" fill="none" stroke="#e01010" stroke-width="1.100"/><ellipse cx="222" cy="140.200" rx="2.600" ry="3.300" fill="none" stroke="#e01010" stroke-width="1.100"/><path d="M248.500 130.500H267.500V151.500H248.500Z" fill="#f2f2f0" stroke="#8a8a8a" stroke-width=".9"/><rect x="250.400" y="139" width="10" height="10.400" fill="#e4e4e4" stroke="#e01010" stroke-width="1.400"/><circle cx="261" cy="137.600" r="4.700" fill="none" stroke="#e01010" stroke-width="1.400"/><circle cx="262.800" cy="145.200" r="6.200" fill="url(#gChk)" stroke="#2e7a0c" stroke-width=".7"/><path d="M259.400 145.200L262 147.800L266.600 142.600" fill="none" stroke="#fff" stroke-width="1.700"/><circle cx="295" cy="141" r="4" fill="#3a68b4"/><circle cx="295" cy="141" r="2.100" fill="#e01818"/><path d="M317 149.8L334.8 132" fill="none" stroke="#14305c" stroke-width="2.900"/><path d="M317 149.8L334.8 132" fill="none" stroke="#4a86d4" stroke-width="1.500"/><circle cx="317" cy="149.8" r="1.9" fill="#e81818" stroke="#7a0808" stroke-width=".7"/><circle cx="334.8" cy="132" r="1.9" fill="#e81818" stroke="#7a0808" stroke-width=".7"/><path d="M358.5 132L366.2 139.4L355.4 150L348 142.5L358.5 132" fill="none" stroke="#14305c" stroke-width="2.900"/><path d="M358.5 132L366.2 139.4L355.4 150L348 142.5L358.5 132" fill="none" stroke="#4a86d4" stroke-width="1.500"/><circle cx="358.5" cy="132" r="1.9" fill="#e81818" stroke="#7a0808" stroke-width=".7"/><circle cx="366.2" cy="139.4" r="1.9" fill="#e81818" stroke="#7a0808" stroke-width=".7"/><circle cx="355.4" cy="150" r="1.9" fill="#e81818" stroke="#7a0808" stroke-width=".7"/><circle cx="348" cy="142.5" r="1.9" fill="#e81818" stroke="#7a0808" stroke-width=".7"/><path d="M386.5 132L386.5 142.5L397 142.5" fill="none" stroke="#14305c" stroke-width="2.900"/><path d="M386.5 132L386.5 142.5L397 142.5" fill="none" stroke="#4a86d4" stroke-width="1.500"/><path d="M386.5 142.5L379 150" fill="none" stroke="#14305c" stroke-width="2.900"/><path d="M386.5 142.5L379 150" fill="none" stroke="#4a86d4" stroke-width="1.500"/><circle cx="386.5" cy="132" r="1.9" fill="#e81818" stroke="#7a0808" stroke-width=".7"/><circle cx="397" cy="142.5" r="1.9" fill="#e81818" stroke="#7a0808" stroke-width=".7"/><circle cx="379" cy="150" r="1.9" fill="#e81818" stroke="#7a0808" stroke-width=".7"/><circle cx="386.5" cy="142.5" r="1.9" fill="#e81818" stroke="#7a0808" stroke-width=".7"/><path d="M409 132.800C412 130.400 416 134.600 419 133.400C422 132.200 424 129.600 429.6 130.400C431 134 428 138 425.5 141C424 143.200 427.5 146 426.5 150C423 152.200 416 149.600 411 147.600C407.4 145 408.4 138 409 132.800Z" fill="url(#gSB)" stroke="#16386a" stroke-width=".9"/><circle cx="428" cy="132" r="1.9" fill="#e81818" stroke="#7a0808" stroke-width=".7"/><circle cx="410" cy="139.5" r="1.9" fill="#e81818" stroke="#7a0808" stroke-width=".7"/><circle cx="425" cy="150" r="1.9" fill="#e81818" stroke="#7a0808" stroke-width=".7"/><path d="M440 132.800C443 130.400 447 134.600 450 133.400C453 132.200 455 129.600 460.6 130.400C462 134 459 138 456.5 141C455 143.200 458.5 146 457.5 150C454 152.200 447 149.600 442 147.600C438.4 145 439.4 138 440 132.800Z" fill="url(#gSG)" stroke="#2a6a08" stroke-width=".9"/><circle cx="459" cy="132" r="1.9" fill="#e81818" stroke="#7a0808" stroke-width=".7"/><circle cx="441" cy="139.5" r="1.9" fill="#e81818" stroke="#7a0808" stroke-width=".7"/><circle cx="456" cy="150" r="1.9" fill="#e81818" stroke="#7a0808" stroke-width=".7"/><path d="M474.500 138C472 139 470 143 470.600 147C472.500 146 474.500 143.500 475.200 141Z" fill="#f09040" stroke="#5a2c08" stroke-width=".7"/><path d="M487.500 138C490 139 492 143 491.400 147C489.500 146 487.500 143.500 486.800 141Z" fill="#f09040" stroke="#5a2c08" stroke-width=".7"/><path d="M476 131.500C478 130 480 131 481 130.400C482 131 484 130 486 131.500C488.500 133 488.500 137 487.500 140C487 145 485 149.500 481 151.200C477 149.500 475 145 474.500 140C473.500 137 473.500 133 476 131.500Z" fill="url(#gShp)" stroke="#5a2c08" stroke-width=".8"/><ellipse cx="482.600" cy="140.400" rx="3.600" ry="2.500" fill="#fff"/><ellipse cx="480.800" cy="140.600" rx="1.900" ry="1.500" fill="#1a1a1a"/><circle cx="484.400" cy="140.400" r="1" fill="#1a1a1a"/><path d="M479.500 147.500H482.500M481 147.500V149" stroke="#3a1c04" stroke-width=".9"/><path d="M513.5 147.2L523.0 143.0L534.5 146.0L524.0 151.4Z" fill="#fafafa" stroke="#4a4a4a" stroke-width="2.4" stroke-linejoin="round"/><path d="M513.5 147.2L523.0 143.0L534.5 146.0L524.0 151.4Z" fill="none" stroke="#f0f0f0" stroke-width="0.9" stroke-linejoin="round"/><path d="M516.8 147.2L523.2 144.6L531.0 146.2L524.0 149.6Z" fill="#f0f0f0"/><path d="M513.7 135.7L524.6 139.6L524.6 144.8L513.7 141.6Z" fill="url(#gY1)" stroke="#3c3408" stroke-width="0.8" stroke-linejoin="round"/><path d="M524.6 139.6L534.2 133.8L534.2 138.6L524.6 144.8Z" fill="url(#gY2)" stroke="#3c3408" stroke-width="0.8" stroke-linejoin="round"/><path d="M513.7 135.7L523.6 130.6L534.2 133.8L524.6 139.6Z" fill="#fff05a" stroke="#3c3408" stroke-width="0.8" stroke-linejoin="round"/><path d="M544.3 148.4L552.0 142.8" fill="none" stroke="#e01414" stroke-width="2"/><path d="M560.0 137.0L565.8 132.8" fill="none" stroke="#e01414" stroke-width="2"/><path d="M544.300 136.500L556.300 131.300C562 132 566 136.500 566.100 141.600L556.800 150.900L551 148.900C551.500 143 549 138.500 544.300 136.500Z" fill="url(#gY3)" stroke="#3c3408" stroke-width=".8" stroke-linejoin="round"/><path d="M544.300 136.500L556.300 131.300C552 134.500 551 135.500 548.800 139.400Z" fill="#fff05a" stroke="#3c3408" stroke-width=".5"/><path d="M548.800 139.400C553.500 141 556.500 145 556.800 150.900" fill="none" stroke="#3c3408" stroke-width=".7"/><path d="M576.4 140.2L582.6 132.8L595.2 134.6L583.4 141.2Z" fill="#f6e23c" stroke="#3c3408" stroke-width="0.6" stroke-linejoin="round"/><path d="M583.4 141.2L595.2 134.6L595.2 150.0L583.4 148.0Z" fill="url(#gY2)" stroke="#3c3408" stroke-width="0.6" stroke-linejoin="round"/><path d="M582.6 132.8L595.4 134.6L595.4 150.4" fill="none" stroke="#e01818" stroke-width="2.2"/><rect x="577.2" y="141" width="6" height="6.800" fill="#e8cc14" stroke="#e01818" stroke-width="1.900"/><path d="M606.1999999999999 141.800C609.4 139 611.4 135 612.8 131L623.0 134L627.8 143.600C622.4 147.500 617.4 149.500 613.8 150.400L613.8 141.800Z" fill="#f8e440" stroke="#3c3408" stroke-width=".7" stroke-linejoin="round"/><path d="M613.8 141.800C617.4 139 620.4 137 623.0 134L627.8 143.600C622.4 147.500 617.4 149.500 613.8 150.400Z" fill="url(#gY2)" stroke="#3c3408" stroke-width=".5"/><path d="M616.4 146L618.9 145M620.9 142L622.9 140.500" stroke="#f0a010" stroke-width="1.500"/><path d="M612.8 131.0L623.0 134.0L627.8 143.6" fill="none" stroke="#e01818" stroke-width="2.2"/><rect x="606.8" y="142.600" width="6.600" height="7.200" fill="#f8e440" stroke="#e01818" stroke-width="1.900"/><rect x="607.6" y="145.600" width="2.800" height="2.200" fill="#9c0808"/><ellipse cx="626.4" cy="131.800" rx="1.100" ry="1.500" fill="none" stroke="#e01818" stroke-width="1.100" transform="rotate(25 626.4 131.8)"/><path d="M637.2 151.0L645.0 144.3" fill="none" stroke="#e01818" stroke-width="1.9"/><path d="M650.5 130.200C648 132 646 134.500 645.5 137C640 138.500 639 144 642.5 147.500C643 149.500 644.5 151.500 646.5 152C647.5 150 647 148.500 646.5 147.500C652 149.500 658 146 658.5 141.500C658 137.500 654.5 136 651 136C652.5 134 652.5 131.500 650.5 130.200Z" fill="#e8d020" stroke="#3c3408" stroke-width=".8" stroke-linejoin="round"/><path d="M647 139.500C650 137.500 654.5 138.500 654.5 141.500C654 144.500 649.5 146 646 144.500C644.5 143 645 141 647 139.500Z" fill="#b89c08" stroke="#3c3408" stroke-width=".6"/><path d="M648 141C650 139.800 652.5 140.300 652.3 141.800C651.8 143.300 649.5 144 647.8 143.300Z" fill="#f0f0f0" stroke="#3c3408" stroke-width=".5"/><path d="M646.0 143.6L658.8 132.6" fill="none" stroke="#e01818" stroke-width="1.9"/><path d="M669.5 134.7L680.6 136.2L680.6 149.6L669.5 147.4Z" fill="#fbe94a" stroke="#3c3408" stroke-width="0.7" stroke-linejoin="round"/><path d="M669.5 134.7L678.1 131.3L688.4 133.3L680.6 136.2Z" fill="#fff47a" stroke="#3c3408" stroke-width="0.7" stroke-linejoin="round"/><path d="M680.6 136.2L688.4 133.3L688.4 146.3L680.6 149.6Z" fill="url(#gY2)" stroke="#3c3408" stroke-width="0.7" stroke-linejoin="round"/><path d="M680.6 136.2L680.6 149.6" fill="none" stroke="#e81c1c" stroke-width="1.6"/><path d="M669.8 148.2L680.6 149.8L688.2 146.4" fill="none" stroke="#e81c1c" stroke-width="1.6"/><circle cx="680.6" cy="136.2" r="1.900" fill="#e81c1c" stroke="#7a0808" stroke-width=".6"/><circle cx="680.6" cy="149.8" r="1.900" fill="#e81c1c" stroke="#7a0808" stroke-width=".6"/><circle cx="669.9" cy="148.4" r="1.900" fill="#e81c1c" stroke="#7a0808" stroke-width=".6"/><circle cx="688.2" cy="146.3" r="1.900" fill="#e81c1c" stroke="#7a0808" stroke-width=".6"/><path d="M717.1 141.1L727.6 145.0L727.6 151.1L717.1 147.2Z" fill="url(#gBl1)" stroke="#0e2a52" stroke-width="0.8" stroke-linejoin="round"/><path d="M727.6 145.0L738.9 135.5L738.9 141.6L727.6 151.1Z" fill="url(#gBl2)" stroke="#0e2a52" stroke-width="0.8" stroke-linejoin="round"/><path d="M717.1 141.1L727.6 131.8L738.9 135.5L727.6 145.0Z" fill="#5a8ed2" stroke="#0e2a52" stroke-width="0.8" stroke-linejoin="round"/><path d="M722.5 139.1L728.1 134.5L733.7 136.2L728.1 140.8Z" fill="#e81818" stroke="#7a0808" stroke-width="0.7" stroke-linejoin="round"/><path d="M722.5 139.1L728.1 134.5L728.1 137.5Z" fill="#a80c0c"/><path d="M748.1 130.3L755.0 129.6L769.8 133.3L762.8 133.8Z" fill="#6a9cdc" stroke="#0e2a52" stroke-width="0.6" stroke-linejoin="round"/><path d="M748.1 130.3L762.8 133.8L762.8 151.8L748.1 147.9Z" fill="url(#gBl3)" stroke="#0e2a52" stroke-width="0.8" stroke-linejoin="round"/><path d="M762.8 133.8L769.8 133.3L769.8 150.9L762.8 151.8Z" fill="url(#gBl2)" stroke="#0e2a52" stroke-width="0.8" stroke-linejoin="round"/><ellipse cx="755.200" cy="140.600" rx="5.200" ry="7.200" fill="url(#gR1)" stroke="#5a0808" stroke-width=".8" transform="rotate(-8 755.2 140.6)"/><path d="M758.400 135.800C760.500 138.500 760.600 143.500 759.200 146.600C758 143.500 758 139 758.400 135.800Z" fill="#fff"/><path d="M779.4 148.2L786.5 143.0" fill="none" stroke="#e01414" stroke-width="1.9"/><path d="M796.0 136.2L800.6 132.9" fill="none" stroke="#e01414" stroke-width="1.9"/><path d="M787.4 131.2C794.7 126.9 803.7 133.4 802.8 143.0L801.2 144.2C802.1 134.6 793.1 128.1 785.8 132.4Z" fill="#2c5a9c" stroke="#0e2a52" stroke-width=".8" stroke-linejoin="round"/><path d="M785.8 132.4C793.1 128.1 802.1 134.6 801.2 144.2L797.8 147.0C798.7 137.4 789.7 130.9 782.4 135.2Z" fill="url(#gR1)" stroke="#5a0808" stroke-width=".7" stroke-linejoin="round"/><path d="M783.0 134.6C790.3 130.3 799.3 136.8 798.4 146.4L794.6 149.2C795.5 139.6 786.5 133.1 779.2 137.4Z" fill="#3a6eb4" stroke="#0e2a52" stroke-width=".7" stroke-linejoin="round"/><path d="M779.200 137.400C786.500 133.100 795.500 139.600 794.600 149.200L790.400 150.800L785.400 148.600C785.800 143.800 783.600 141.400 780.600 141Z" fill="url(#gBl3)" stroke="#0e2a52" stroke-width=".8" stroke-linejoin="round"/><path d="M781.200 139.200C787.500 137.500 792 142.500 792.200 150" fill="none" stroke="#0e2a52" stroke-width=".6" stroke-dasharray="2.5 1.2"/><path d="M811.4 140.2L817.6 132.8L830.2 134.6L818.4 141.2Z" fill="#f02828" stroke="#5a0808" stroke-width="0.6" stroke-linejoin="round"/><path d="M818.4 141.2L830.2 134.6L830.2 150.0L818.4 148.0Z" fill="url(#gR2)" stroke="#5a0808" stroke-width="0.6" stroke-linejoin="round"/><path d="M817.6 132.8L830.4 134.6L830.4 150.4" fill="none" stroke="#3a72bc" stroke-width="2.2"/><rect x="812.2" y="141" width="6" height="6.800" fill="#e81c1c" stroke="#3a72bc" stroke-width="1.900"/><path d="M841.4 141.800C844.6 139 846.6 135 848.0 131L858.2 134L863.0 143.600C857.6 147.500 852.6 149.500 849.0 150.400L849.0 141.800Z" fill="#ec2020" stroke="#5a0808" stroke-width=".7" stroke-linejoin="round"/><path d="M849.0 141.800C852.6 139 855.6 137 858.2 134L863.0 143.600C857.6 147.500 852.6 149.500 849.0 150.400Z" fill="url(#gR2)" stroke="#5a0808" stroke-width=".5"/><path d="M851.6 146L854.1 145M856.1 142L858.1 140.500" stroke="#a0b8e0" stroke-width="1.500"/><path d="M848.0 131.0L858.2 134.0L863.0 143.6" fill="none" stroke="#3a72bc" stroke-width="2.2"/><rect x="842.0" y="142.600" width="6.600" height="7.200" fill="#ec2020" stroke="#3a72bc" stroke-width="1.900"/><rect x="842.8000000000001" y="145.600" width="2.800" height="2.200" fill="#24508e"/><ellipse cx="861.6" cy="131.800" rx="1.100" ry="1.500" fill="none" stroke="#3a72bc" stroke-width="1.100" transform="rotate(25 861.6 131.8)"/><path d="M872.2 151.0L880.0 144.3" fill="none" stroke="#e01818" stroke-width="1.9"/><path d="M885.5 130.200C883 132 881 134.500 880.5 137C875 138.500 874 144 877.5 147.500C878 149.500 879.5 151.500 881.5 152C882.5 150 882 148.500 881.5 147.500C887 149.500 893 146 893.5 141.500C893 137.500 889.5 136 886 136C887.5 134 887.5 131.500 885.5 130.200Z" fill="#3a72bc" stroke="#0e2a52" stroke-width=".8" stroke-linejoin="round"/><path d="M882 139.500C885 137.500 889.5 138.500 889.5 141.500C889 144.500 884.5 146 881 144.500C879.5 143 880 141 882 139.500Z" fill="#24508e" stroke="#0e2a52" stroke-width=".6"/><path d="M883 141C885 139.800 887.5 140.300 887.3 141.800C886.8 143.300 884.5 144 882.8 143.300Z" fill="#f0f0f0" stroke="#0e2a52" stroke-width=".5"/><path d="M881.0 143.6L893.8 132.6" fill="none" stroke="#e01818" stroke-width="1.9"/><path d="M904.5 134.7L915.6 136.2L915.6 149.6L904.5 147.4Z" fill="#f02828" stroke="#5a0808" stroke-width="0.7" stroke-linejoin="round"/><path d="M904.5 134.7L913.1 131.3L923.4 133.3L915.6 136.2Z" fill="#f84848" stroke="#5a0808" stroke-width="0.7" stroke-linejoin="round"/><path d="M915.6 136.2L923.4 133.3L923.4 146.3L915.6 149.6Z" fill="url(#gR2)" stroke="#5a0808" stroke-width="0.7" stroke-linejoin="round"/><path d="M915.6 136.2L915.6 149.6" fill="none" stroke="#3a72bc" stroke-width="1.6"/><path d="M904.8 148.2L915.6 149.8L923.2 146.4" fill="none" stroke="#3a72bc" stroke-width="1.6"/><circle cx="915.6" cy="136.2" r="1.900" fill="#3a72bc" stroke="#0e2a52" stroke-width=".6"/><circle cx="915.6" cy="149.8" r="1.900" fill="#3a72bc" stroke="#0e2a52" stroke-width=".6"/><circle cx="904.9" cy="148.4" r="1.900" fill="#3a72bc" stroke="#0e2a52" stroke-width=".6"/><circle cx="923.2" cy="146.3" r="1.900" fill="#3a72bc" stroke="#0e2a52" stroke-width=".6"/><path d="M952.3 141.6L963.0 137.0L968.9 131.3L973.8 132.8L973.8 151.5L952.3 151.5Z" fill="url(#gBl1)" stroke="#0e2a52" stroke-width="0.8" stroke-linejoin="round"/><path d="M952.3 141.6L963.0 137.0L973.8 146.0L973.8 151.5L952.3 151.5Z" fill="#4a80c8" stroke="#0e2a52" stroke-width="0.5" stroke-linejoin="round"/><path d="M955.2 133.0L957.7 130.3L963.0 133.5L963.0 143.2L959.0 144.8L955.2 142.5Z" fill="url(#gBl2)" stroke="#0e2a52" stroke-width="0.7" stroke-linejoin="round"/><path d="M959.0 135.5L959.0 144.8" fill="none" stroke="#0e2a52" stroke-width="0.5"/><path d="M955.2 133.0L957.7 130.3L963.0 133.5L959.0 135.5Z" fill="#5a8ed2" stroke="#0e2a52" stroke-width="0.5" stroke-linejoin="round"/><path d="M953.5 150.0L973.0 137.5" fill="none" stroke="#e81818" stroke-width="1.9" stroke-dasharray="3.2 2.200"/><path d="M962.600 139.500V146C962.600 149.200 973.300 149.200 973.300 146V139.500Z" fill="url(#gY3)" stroke="#3c3408" stroke-width=".6"/><path d="M962.600 139.500C962.600 137.500 968 136 968 136.500C968 136 973.300 137.500 973.300 139.500C973.300 142 962.600 142 962.600 139.500Z" fill="#fff05a" stroke="#3c3408" stroke-width=".6"/><path d="M983.1 139.6L1000.2 131.0L1004.9 133.3L1004.9 151.5L983.1 151.5Z" fill="url(#gBl1)" stroke="#0e2a52" stroke-width="0.8" stroke-linejoin="round"/><path d="M983.1 144.5L1004.9 148.5L1004.9 151.5L983.1 151.5Z" fill="#3c72b8" stroke="#0e2a52" stroke-width="0.5" stroke-linejoin="round"/><path d="M983.6 139.4L987.2 140.8L987.2 144.2L983.6 142.8Z" fill="#3468ac" stroke="#0e2a52" stroke-width="0.5" stroke-linejoin="round"/><path d="M983.6 139.4L987.0 137.8L990.6 139.0L987.2 140.8Z" fill="#5a8ed2" stroke="#0e2a52" stroke-width="0.5" stroke-linejoin="round"/><path d="M987.2 140.8L990.6 139.0L990.6 142.4L987.2 144.2Z" fill="#24508e" stroke="#0e2a52" stroke-width="0.5" stroke-linejoin="round"/><path d="M990.8 139.4L994.4 140.8L994.4 144.2L990.8 142.8Z" fill="#f8e440" stroke="#3c3408" stroke-width="0.5" stroke-linejoin="round"/><path d="M990.8 139.4L994.2 137.8L997.8 139.0L994.4 140.8Z" fill="#fff47a" stroke="#3c3408" stroke-width="0.5" stroke-linejoin="round"/><path d="M994.4 140.8L997.8 139.0L997.8 142.4L994.4 144.2Z" fill="#c8ac0c" stroke="#3c3408" stroke-width="0.5" stroke-linejoin="round"/><path d="M998.0 139.4L1001.6 140.8L1001.6 144.2L998.0 142.8Z" fill="#f8e440" stroke="#3c3408" stroke-width="0.5" stroke-linejoin="round"/><path d="M998.0 139.4L1001.4 137.8L1005.0 139.0L1001.6 140.8Z" fill="#fff47a" stroke="#3c3408" stroke-width="0.5" stroke-linejoin="round"/><path d="M1001.6 140.8L1005.0 139.0L1005.0 142.4L1001.6 144.2Z" fill="#c8ac0c" stroke="#3c3408" stroke-width="0.5" stroke-linejoin="round"/><path d="M1014.2 142.0L1024.0 136.0L1030.0 136.0L1030.0 151.5L1014.2 151.5Z" fill="url(#gBl1)" stroke="#0e2a52" stroke-width="0.8" stroke-linejoin="round"/><path d="M1018.5 134.0L1022.1 135.4L1022.1 138.8L1018.5 137.4Z" fill="#f8e440" stroke="#3c3408" stroke-width="0.5" stroke-linejoin="round"/><path d="M1018.5 134.0L1021.9 132.4L1025.5 133.6L1022.1 135.4Z" fill="#fff47a" stroke="#3c3408" stroke-width="0.5" stroke-linejoin="round"/><path d="M1022.1 135.4L1025.5 133.6L1025.5 137.0L1022.1 138.8Z" fill="#c8ac0c" stroke="#3c3408" stroke-width="0.5" stroke-linejoin="round"/><path d="M1016.0 138.5L1019.6 139.9L1019.6 143.3L1016.0 141.9Z" fill="#f8e440" stroke="#3c3408" stroke-width="0.5" stroke-linejoin="round"/><path d="M1016.0 138.5L1019.4 136.9L1023.0 138.1L1019.6 139.9Z" fill="#fff47a" stroke="#3c3408" stroke-width="0.5" stroke-linejoin="round"/><path d="M1019.6 139.9L1023.0 138.1L1023.0 141.5L1019.6 143.3Z" fill="#c8ac0c" stroke="#3c3408" stroke-width="0.5" stroke-linejoin="round"/><path d="M1016.5 143.5L1020.1 144.9L1020.1 148.3L1016.5 146.9Z" fill="#3468ac" stroke="#0e2a52" stroke-width="0.5" stroke-linejoin="round"/><path d="M1016.5 143.5L1019.9 141.9L1023.5 143.1L1020.1 144.9Z" fill="#5a8ed2" stroke="#0e2a52" stroke-width="0.5" stroke-linejoin="round"/><path d="M1020.1 144.9L1023.5 143.1L1023.5 146.5L1020.1 148.3Z" fill="#24508e" stroke="#0e2a52" stroke-width="0.5" stroke-linejoin="round"/></svg>
<svg style="left:0;top:0" width="1024" height="680" viewBox="0 0 1024 680" shape-rendering="crispEdges"><rect x="643" y="226" width="194" height="259" fill="none" stroke="#fff" stroke-width="2"/><rect x="657" y="241" width="165" height="217" fill="none" stroke="#fff" stroke-width="2"/><rect x="641.0" y="224.0" width="4" height="4" fill="#fff"/><rect x="835.0" y="224.0" width="4" height="4" fill="#fff"/><rect x="641.0" y="483.0" width="4" height="4" fill="#fff"/><rect x="835.0" y="483.0" width="4" height="4" fill="#fff"/><rect x="655.0" y="239.0" width="4" height="4" fill="#fff"/><rect x="820.0" y="239.0" width="4" height="4" fill="#fff"/><rect x="655.0" y="456.0" width="4" height="4" fill="#fff"/><rect x="820.0" y="456.0" width="4" height="4" fill="#fff"/><rect x="655.0" y="304.0" width="4" height="4" fill="#fff"/><rect x="820.0" y="304.0" width="4" height="4" fill="#fff"/><rect x="655.0" y="356.0" width="4" height="4" fill="#fff"/><rect x="820.0" y="356.0" width="4" height="4" fill="#fff"/><path d="M868 680V168H1024" fill="none" stroke="#fff" stroke-width="2"/><rect x="866.0" y="166.0" width="4" height="4" fill="#fff"/><path d="M1024 183H902V210H1024" fill="none" stroke="#fff" stroke-width="2"/><rect x="900.0" y="181.0" width="4" height="4" fill="#fff"/><rect x="900.0" y="208.0" width="4" height="4" fill="#fff"/><path d="M1024 226.5H902V485H1024" fill="none" stroke="#fff" stroke-width="2"/><rect x="900.0" y="224.5" width="4" height="4" fill="#fff"/><rect x="900.0" y="483.0" width="4" height="4" fill="#fff"/><path d="M1024 241H917V458" fill="none" stroke="#fff" stroke-width="2"/><rect x="915.0" y="239.0" width="4" height="4" fill="#fff"/><rect x="915.0" y="456.0" width="4" height="4" fill="#fff"/><rect x="880" y="486" width="15" height="30" fill="none" stroke="#fafafa" stroke-width="2"/><rect x="878.0" y="484.0" width="4" height="4" fill="#fff"/><rect x="893.0" y="484.0" width="4" height="4" fill="#fff"/><rect x="878.0" y="514.0" width="4" height="4" fill="#fff"/><rect x="893.0" y="514.0" width="4" height="4" fill="#fff"/><rect x="902" y="517.5" width="73" height="145.5" fill="none" stroke="#fff" stroke-width="2"/><rect x="900.0" y="515.5" width="4" height="4" fill="#fff"/><rect x="973.0" y="515.5" width="4" height="4" fill="#fff"/><rect x="900.0" y="661.0" width="4" height="4" fill="#fff"/><rect x="973.0" y="661.0" width="4" height="4" fill="#fff"/><path d="M1024 517.5H990V663H1024" fill="none" stroke="#fff" stroke-width="2"/><rect x="988.0" y="515.5" width="4" height="4" fill="#fff"/><rect x="988.0" y="661.0" width="4" height="4" fill="#fff"/><rect x="917" y="458" width="107" height="1" fill="#22e61e"/><path d="M917.3 458L925 454V462Z" fill="#d01010"/><path d="M983 158V680" stroke="#000" stroke-width="2"/></svg>
<div class="a" style="left:325px;top:424px;width:265px;height:86px;background:#f0f0f0;overflow:hidden">
 <div class="a" style="left:31px;top:46px;width:231px;height:1px;background:#d7d7d7"></div>
 <div class="a" style="left:3px;top:51px;width:259px;height:22px;background:#90c8f6"></div>
 <svg style="left:6px;top:55px" width="16" height="14" viewBox="0 0 16 14">
  <path d="M2 3h6M2 3v8M8 3v3M5 6v5" fill="none" stroke="#7f9cc0" stroke-width="1.6"/>
  <path d="M9 7h3M12 3.5L9.5 7l2.5 3.5" fill="none" stroke="#4a78b4" stroke-width="1.3"/>
  <circle cx="12.6" cy="3.2" r="1.9" fill="#5588c8"/><circle cx="12.6" cy="10.8" r="1.9" fill="#5588c8"/><circle cx="9.2" cy="7" r="1.6" fill="#5588c8"/>
 </svg>
 <svg style="left:6px;top:76px" width="16" height="12" viewBox="0 0 16 12">
  <rect x="0.5" y="0.5" width="7" height="11" fill="#f4f4f4" stroke="#888" stroke-width="1"/>
  <rect x="1.5" y="2" width="5" height="2" fill="#d81818"/><rect x="1.5" y="5" width="5" height="2" fill="#e8c800"/><rect x="1.5" y="8" width="5" height="2" fill="#4a78b4"/>
  <circle cx="11" cy="12" r="3" fill="#4a78b4"/>
 </svg>
</div>

<div class="a" style="left:325px;top:520px;width:258px;height:130px;background:#fff;border:1px solid #b8b8b8;box-sizing:border-box"></div>

<div id="texts">
<span class="t" style="left:-33px;top:2.50px;font-size:12px;line-height:18.0px;color:#000;"><span class="r" style="width:34.68px"><span class="s" style="transform:scaleX(0.7223)">ファイル</span></span><span class="r" style="width:14.82px"><span class="s" style="transform:scaleX(0.9668)">(F)</span></span></span>
<span class="t" style="left:33px;top:2.50px;font-size:12px;line-height:18.0px;color:#000;"><span class="r" style="width:23.02px"><span class="s" style="transform:scaleX(0.9586)">編集</span></span><span class="r" style="width:14.58px"><span class="s" style="transform:scaleX(0.9112)">(E)</span></span></span>
<span class="t" style="left:87.3px;top:2.50px;font-size:12px;line-height:18.0px;color:#000;"><span class="r" style="width:23.33px"><span class="s" style="transform:scaleX(0.9713)">表示</span></span><span class="r" style="width:14.77px"><span class="s" style="transform:scaleX(0.9233)">(V)</span></span></span>
<span class="t" style="left:141.8px;top:2.50px;font-size:12px;line-height:18.0px;color:#000;"><span class="r" style="width:25.61px"><span class="s" style="transform:scaleX(0.7111)">ツール</span></span><span class="r" style="width:14.59px"><span class="s" style="transform:scaleX(0.9519)">(T)</span></span></span>
<span class="t" style="left:199px;top:2.50px;font-size:12px;line-height:18.0px;color:#000;"><span class="r" style="width:26.96px"><span class="s" style="transform:scaleX(0.7486)">マクロ</span></span><span class="r" style="width:18.04px"><span class="s" style="transform:scaleX(1.0021)">(M)</span></span></span>
<span class="t" style="left:261.6px;top:2.50px;font-size:12px;line-height:18.0px;color:#000;"><span class="r" style="width:33.40px"><span class="s" style="transform:scaleX(0.9104)">Sketch</span></span></span>
<span class="t" style="left:312.6px;top:2.50px;font-size:12px;line-height:18.0px;color:#000;"><span class="r" style="width:58.60px"><span class="s" style="transform:scaleX(0.9346)">Part Design</span></span></span>
<span class="t" style="left:388.2px;top:2.50px;font-size:12px;line-height:18.0px;color:#000;"><span class="r" style="width:22.80px"><span class="s" style="transform:scaleX(0.9494)">計測</span></span></span>
<span class="t" style="left:428.3px;top:2.50px;font-size:12px;line-height:18.0px;color:#000;"><span class="r" style="width:42.21px"><span class="s" style="transform:scaleX(0.7033)">ウィンドウ</span></span><span class="r" style="width:18.19px"><span class="s" style="transform:scaleX(0.9412)">(W)</span></span></span>
<span class="t" style="left:505.4px;top:2.50px;font-size:12px;line-height:18.0px;color:#000;"><span class="r" style="width:27.66px"><span class="s" style="transform:scaleX(0.7680)">ヘルプ</span></span><span class="r" style="width:17.14px"><span class="s" style="transform:scaleX(1.0281)">(H)</span></span></span>
<span class="t" style="left:100.2px;top:29.05px;font-size:13px;line-height:19.5px;color:#000;"><span class="r" style="width:59.20px"><span class="s" style="transform:scaleX(0.8716)">Part Design</span></span></span>
<span class="t" style="left:-35.5px;top:161.00px;font-size:12px;line-height:18.0px;color:#000;"><span class="r" style="width:51.50px"><span class="s" style="transform:scaleX(0.7151)">コンボビュー</span></span></span>
<span class="t" style="left:-28.5px;top:182.00px;font-size:12px;line-height:18.0px;color:#000;"><span class="r" style="width:30.00px"><span class="s" style="transform:scaleX(0.8330)">モデル</span></span></span>
<span class="t" style="left:25.5px;top:182.00px;font-size:12px;line-height:18.0px;color:#000;"><span class="r" style="width:25.50px"><span class="s" style="transform:scaleX(0.7080)">タスク</span></span></span>
<span class="t" style="left:-30.5px;top:205.00px;font-size:12px;line-height:18.0px;color:#000;"><span class="r" style="width:25.71px"><span class="s" style="transform:scaleX(0.7138)">ラベル</span></span><span class="r" style="width:9.66px"><span class="s" style="transform:scaleX(0.8036)">と</span></span><span class="r" style="width:24.14px"><span class="s" style="transform:scaleX(1.0051)">属性</span></span></span>
<span class="t" style="left:49.2px;top:227.00px;font-size:12px;line-height:18.0px;color:#808080;"><span class="r" style="width:54.00px"><span class="s" style="transform:scaleX(0.9521)">Pocket644</span></span></span>
<span class="t" style="left:49.2px;top:247.00px;font-size:12px;line-height:18.0px;color:#808080;"><span class="r" style="width:44.00px"><span class="s" style="transform:scaleX(0.9331)">Pad1105</span></span></span>
<span class="t" style="left:49.2px;top:267.00px;font-size:12px;line-height:18.0px;color:#808080;"><span class="r" style="width:54.00px"><span class="s" style="transform:scaleX(0.9521)">Pocket645</span></span></span>
<span class="t" style="left:49.2px;top:287.00px;font-size:12px;line-height:18.0px;color:#808080;"><span class="r" style="width:44.00px"><span class="s" style="transform:scaleX(0.9331)">Pad1106</span></span></span>
<span class="t" style="left:49.2px;top:307.00px;font-size:12px;line-height:18.0px;color:#808080;"><span class="r" style="width:44.00px"><span class="s" style="transform:scaleX(0.9331)">Pad1107</span></span></span>
<span class="t" style="left:49.2px;top:327.00px;font-size:12px;line-height:18.0px;color:#808080;"><span class="r" style="width:23.89px"><span class="s" style="transform:scaleX(0.9949)">側面</span></span><span class="r" style="width:9.56px"><span class="s" style="transform:scaleX(0.7954)">を</span></span><span class="r" style="width:23.89px"><span class="s" style="transform:scaleX(0.9949)">取得</span></span><span class="r" style="width:47.79px"><span class="s" style="transform:scaleX(0.7962)">するための</span></span><span class="r" style="width:33.93px"><span class="s" style="transform:scaleX(0.7066)">スケッチ</span></span><span class="r" style="width:18.94px"><span class="s" style="transform:scaleX(0.9458)">002</span></span></span>
<span class="t" style="left:49.2px;top:347.00px;font-size:12px;line-height:18.0px;color:#808080;"><span class="r" style="width:36.14px"><span class="s" style="transform:scaleX(1.0034)">空洞化</span></span><span class="r" style="width:38.55px"><span class="s" style="transform:scaleX(0.8028)">のための</span></span><span class="r" style="width:34.21px"><span class="s" style="transform:scaleX(0.7125)">スケッチ</span></span><span class="r" style="width:19.10px"><span class="s" style="transform:scaleX(0.9537)">002</span></span></span>
<span class="t" style="left:49.2px;top:367.00px;font-size:12px;line-height:18.0px;color:#000;"><span class="r" style="width:54.00px"><span class="s" style="transform:scaleX(0.9521)">Pocket647</span></span></span>
<span class="t" style="left:49.2px;top:387.00px;font-size:12px;line-height:18.0px;color:#000;"><span class="r" style="width:23.97px"><span class="s" style="transform:scaleX(0.9980)">後面</span></span><span class="r" style="width:34.03px"><span class="s" style="transform:scaleX(0.7088)">スケッチ</span></span></span>
<span class="t" style="left:49.2px;top:407.00px;font-size:12px;line-height:18.0px;color:#000;"><span class="r" style="width:47.95px"><span class="s" style="transform:scaleX(0.9987)">後面貫通</span></span><span class="r" style="width:34.05px"><span class="s" style="transform:scaleX(0.7091)">スケッチ</span></span></span>
<span class="t" style="left:49.2px;top:427.00px;font-size:12px;line-height:18.0px;color:#000;"><span class="r" style="width:24.22px"><span class="s" style="transform:scaleX(1.0085)">後面</span></span><span class="r" style="width:68.78px"><span class="s" style="transform:scaleX(0.7164)">モールドスケッチ</span></span></span>
<span class="t" style="left:49.2px;top:447.00px;font-size:12px;line-height:18.0px;color:#000;"><span class="r" style="width:24.21px"><span class="s" style="transform:scaleX(1.0081)">後面</span></span><span class="r" style="width:34.38px"><span class="s" style="transform:scaleX(0.7160)">モールド</span></span><span class="r" style="width:6.41px"><span class="s" style="transform:scaleX(0.9584)">2</span></span></span>
<span class="t" style="left:49.2px;top:467.00px;font-size:12px;line-height:18.0px;color:#000;"><span class="r" style="width:11.98px"><span class="s" style="transform:scaleX(0.9968)">後</span></span><span class="r" style="width:51.02px"><span class="s" style="transform:scaleX(0.7085)">ノブスケッチ</span></span></span>
<span class="t" style="left:49.2px;top:487.00px;font-size:12px;line-height:18.0px;color:#000;"><span class="r" style="width:23.97px"><span class="s" style="transform:scaleX(0.9980)">配管</span></span><span class="r" style="width:34.03px"><span class="s" style="transform:scaleX(0.7088)">スケッチ</span></span></span>
<span class="t" style="left:49.2px;top:507.00px;font-size:12px;line-height:18.0px;color:#000;"><span class="r" style="width:36.14px"><span class="s" style="transform:scaleX(1.0036)">配管覆</span></span><span class="r" style="width:9.64px"><span class="s" style="transform:scaleX(0.8022)">い</span></span><span class="r" style="width:34.22px"><span class="s" style="transform:scaleX(0.7126)">スケッチ</span></span></span>
<span class="t" style="left:49.2px;top:527.00px;font-size:12px;line-height:18.0px;color:#000;"><span class="r" style="width:36.11px"><span class="s" style="transform:scaleX(1.0025)">配管覆</span></span><span class="r" style="width:9.63px"><span class="s" style="transform:scaleX(0.8013)">い</span></span><span class="r" style="width:34.18px"><span class="s" style="transform:scaleX(0.7119)">スケッチ</span></span><span class="r" style="width:19.09px"><span class="s" style="transform:scaleX(0.9528)">002</span></span></span>
<span class="t" style="left:49.2px;top:547.00px;font-size:12px;line-height:18.0px;color:#000;"><span class="r" style="width:35.74px"><span class="s" style="transform:scaleX(0.9924)">配管覆</span></span><span class="r" style="width:9.53px"><span class="s" style="transform:scaleX(0.7932)">い</span></span><span class="r" style="width:33.83px"><span class="s" style="transform:scaleX(0.7047)">スケッチ</span></span><span class="r" style="width:18.89px"><span class="s" style="transform:scaleX(0.9432)">001</span></span></span>
<span class="t" style="left:-29.5px;top:594.50px;font-size:12px;line-height:18.0px;color:#000;"><span class="r" style="width:43.00px"><span class="s" style="transform:scaleX(0.7254)">プロパティ</span></span></span>
<span class="t" style="left:70px;top:594.50px;font-size:12px;line-height:18.0px;color:#000;"><span class="r" style="width:11.00px"><span class="s" style="transform:scaleX(0.9155)">値</span></span></span>
<span class="t" style="left:-1.2px;top:616.50px;font-size:12px;line-height:18.0px;color:#fff;"><span class="r" style="width:58.50px"><span class="s" style="transform:scaleX(0.9637)">Constraints</span></span></span>
<span class="t" style="left:-8px;top:636.50px;font-size:12px;line-height:18.0px;color:#000;"><span class="r" style="width:65.00px"><span class="s" style="transform:scaleX(0.9745)">Autoconstr...</span></span></span>
<span class="t" style="left:69.3px;top:636.50px;font-size:12px;line-height:18.0px;color:#000;"><span class="r" style="width:21.00px"><span class="s" style="transform:scaleX(1.0151)">true</span></span></span>
<span class="t" style="left:-7.6px;top:656.30px;font-size:12px;line-height:18.0px;color:#000;"><span class="r" style="width:65.50px"><span class="s" style="transform:scaleX(0.9119)">Avoid Redu...</span></span></span>
<span class="t" style="left:69.3px;top:656.30px;font-size:12px;line-height:18.0px;color:#000;"><span class="r" style="width:21.00px"><span class="s" style="transform:scaleX(1.0151)">true</span></span></span>
<span class="t" style="left:360.1px;top:424.60px;font-size:12px;line-height:18.0px;color:#000;font-weight:700;"><span class="r" style="width:33.99px"><span class="s" style="transform:scaleX(0.7079)">スケッチ</span></span><span class="r" style="width:9.57px"><span class="s" style="transform:scaleX(0.7968)">を</span></span><span class="r" style="width:23.94px"><span class="s" style="transform:scaleX(0.9967)">編集</span></span></span>
<span class="t" style="left:360.1px;top:446.50px;font-size:12px;line-height:18.0px;color:#000;"><span class="r" style="width:23.88px"><span class="s" style="transform:scaleX(0.9945)">添付</span></span><span class="r" style="width:33.92px"><span class="s" style="transform:scaleX(0.7190)">エディタ</span></span></span>
<span class="t" style="left:360.1px;top:477.50px;font-size:12px;line-height:18.0px;color:#000;"><span class="r" style="width:51.26px"><span class="s" style="transform:scaleX(0.7117)">オブジェクト</span></span><span class="r" style="width:9.63px"><span class="s" style="transform:scaleX(0.8011)">を</span></span><span class="r" style="width:12.03px"><span class="s" style="transform:scaleX(1.0014)">他</span></span><span class="r" style="width:9.63px"><span class="s" style="transform:scaleX(0.8011)">の</span></span><span class="r" style="width:34.17px"><span class="s" style="transform:scaleX(0.7244)">ボディー</span></span><span class="r" style="width:9.63px"><span class="s" style="transform:scaleX(0.8011)">へ</span></span><span class="r" style="width:24.06px"><span class="s" style="transform:scaleX(1.0020)">移動</span></span></span>
<span class="t" style="left:360.1px;top:500.00px;font-size:12px;line-height:18.0px;color:#000;clip-path:inset(0 0 8px 0);"><span class="r" style="width:22.50px"><span class="s" style="transform:scaleX(0.9369)">表示</span></span></span>
<span class="t" style="left:538px;top:500.00px;font-size:12px;line-height:18.0px;color:#000;clip-path:inset(0 0 8px 0);"><span class="r" style="width:34.00px"><span class="s" style="transform:scaleX(0.9900)">Ctrl+D</span></span></span>
<span class="t" style="left:334.2px;top:526.79px;font-size:18.67px;line-height:28.01px;color:#000;font-weight:700;font-family:"Liberation Sans","Noto Sans CJK JP",sans-serif;"><span class="r" style="width:36.95px"><span class="s" style="transform:scaleX(0.9902)">作成</span></span><span class="r" style="width:36.95px"><span class="s" style="transform:scaleX(0.9902)">した</span></span><span class="r" style="width:73.89px"><span class="s" style="transform:scaleX(0.9902)">スケッチ</span></span><span class="r" style="width:18.47px"><span class="s" style="transform:scaleX(0.9902)">を</span></span><span class="r" style="width:10.29px"><span class="s" style="transform:scaleX(0.9902)">2</span></span><span class="r" style="width:18.47px"><span class="s" style="transform:scaleX(0.9902)">つ</span></span><span class="r" style="width:18.47px"><span class="s" style="transform:scaleX(0.9902)">コ</span></span></span>
<span class="t" style="left:334.2px;top:557.29px;font-size:18.67px;line-height:28.01px;color:#000;font-weight:700;font-family:"Liberation Sans","Noto Sans CJK JP",sans-serif;"><span class="r" style="width:37.33px"><span class="s" style="transform:scaleX(1.0006)">ピー</span></span><span class="r" style="width:56.00px"><span class="s" style="transform:scaleX(1.0006)">します</span></span><span class="r" style="width:18.67px"><span class="s" style="transform:scaleX(1.0006)">。</span></span><span class="r" style="width:56.00px"><span class="s" style="transform:scaleX(1.0006)">コピー</span></span><span class="r" style="width:56.00px"><span class="s" style="transform:scaleX(1.0006)">後「後</span></span></span>
<span class="t" style="left:334.2px;top:588.50px;font-size:18.67px;line-height:28.01px;color:#000;font-weight:700;font-family:"Liberation Sans","Noto Sans CJK JP",sans-serif;"><span class="r" style="width:18.77px"><span class="s" style="transform:scaleX(1.0061)">面</span></span><span class="r" style="width:73.77px"><span class="s" style="transform:scaleX(1.0061)">ボディー</span></span><span class="r" style="width:18.77px"><span class="s" style="transform:scaleX(1.0061)">」</span></span><span class="r" style="width:18.77px"><span class="s" style="transform:scaleX(1.0061)">に</span></span><span class="r" style="width:37.54px"><span class="s" style="transform:scaleX(1.0061)">移動</span></span><span class="r" style="width:56.31px"><span class="s" style="transform:scaleX(1.0061)">します</span></span><span class="r" style="width:18.77px"><span class="s" style="transform:scaleX(1.0061)">。</span></span></span>
<span class="t" style="left:932.4px;top:426.75px;font-size:29px;line-height:43.5px;color:#22e61e;"><span class="r" style="width:102.50px"><span class="s" style="transform:scaleX(0.9085)">3.04 mm</span></span></span>
</div>
</body></html>
